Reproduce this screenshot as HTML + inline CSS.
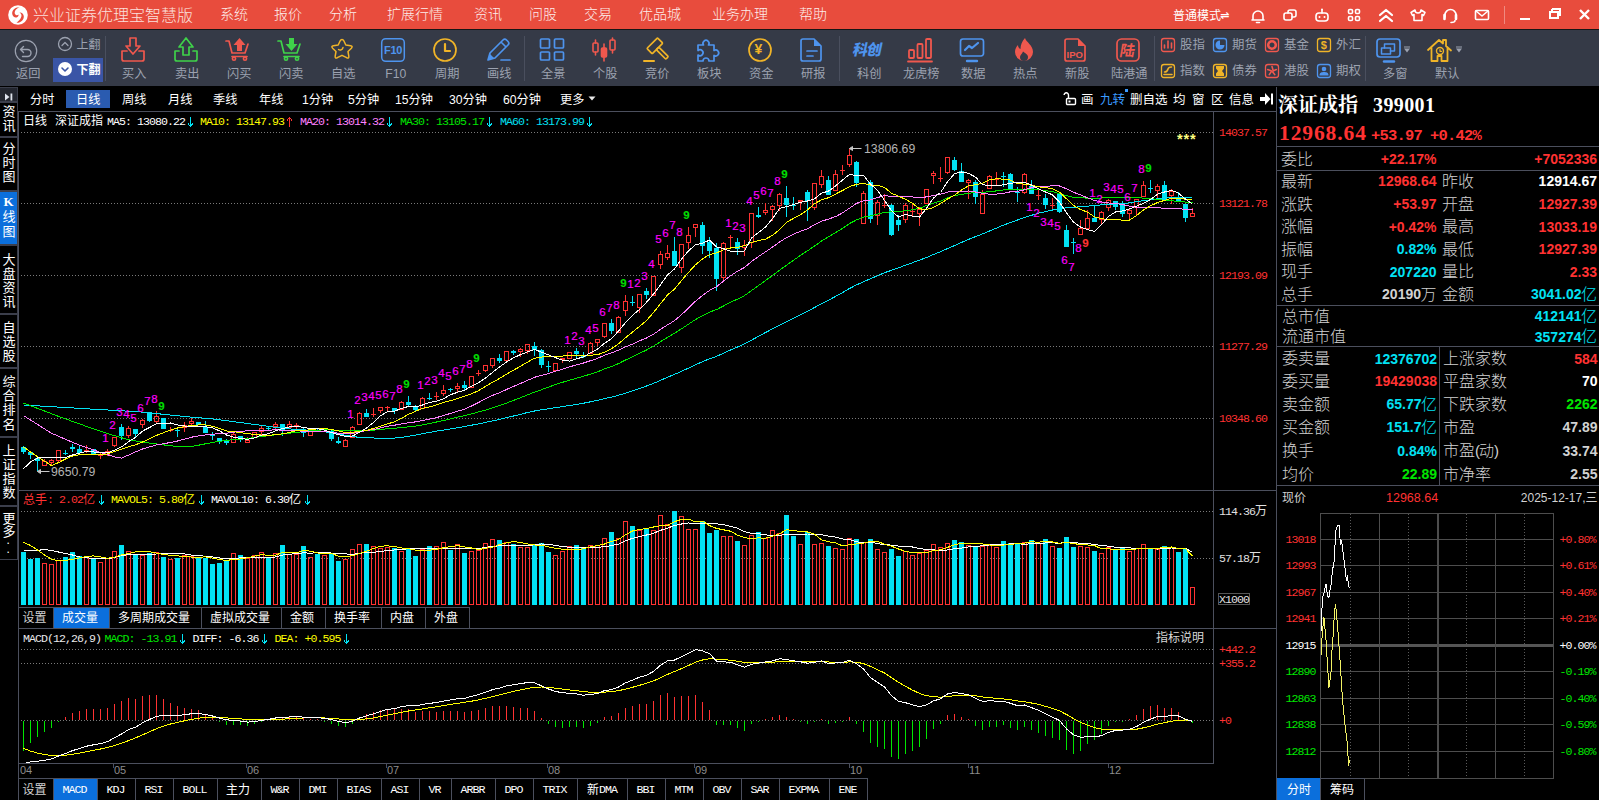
<!DOCTYPE html>
<html lang="zh-CN">
<head>
<meta charset="utf-8">
<title>兴业证券优理宝智慧版</title>
<style>
html,body{margin:0;padding:0;background:#000;}
body{width:1599px;height:800px;overflow:hidden;position:relative;font-family:"Liberation Sans","Noto Sans CJK SC",sans-serif;}
div,span,svg{position:absolute;}
span{white-space:nowrap;display:block;}
svg{overflow:visible;}
</style>
</head>
<body>
<div id="titlebar" style="left:0;top:0;width:1599px;height:29px;background:#e84c3d">
<svg style="position:absolute;left:6px;top:3px" width="24" height="24" viewBox="0 0 24 24"><circle cx="12" cy="12" r="9.800" fill="#fff"/><path d="M13.500 4.200c-4.500-.300-7.500 3-7.300 6.500.200 2.500 2.300 4 4.300 3.700 1.500-.300 2.300-1.500 2-2.800-1 1.200-3 .800-3.600-.800-.800-2.500 1.200-5.500 4.600-6.600z" fill="#e84c3d"/><path d="M10.500 19.800c4.500.300 7.500-3 7.300-6.500-.200-2.500-2.300-4-4.300-3.700 2 1 2.500 3 1.500 5-.800 2-2.500 3.800-4.500 5.200z" fill="#e84c3d"/></svg>
<span style="top:4.76px;font-size:16px;line-height:21px;color:#fbe0dc;left:33.00px;font-weight:300;">兴业证券优理宝智慧版</span>
<span style="top:4.95px;font-size:14px;line-height:18px;color:#fdeeec;left:220.00px;font-weight:300;">系统</span>
<span style="top:4.95px;font-size:14px;line-height:18px;color:#fdeeec;left:274.00px;font-weight:300;">报价</span>
<span style="top:4.95px;font-size:14px;line-height:18px;color:#fdeeec;left:329.00px;font-weight:300;">分析</span>
<span style="top:4.95px;font-size:14px;line-height:18px;color:#fdeeec;left:387.00px;font-weight:300;">扩展行情</span>
<span style="top:4.95px;font-size:14px;line-height:18px;color:#fdeeec;left:474.00px;font-weight:300;">资讯</span>
<span style="top:4.95px;font-size:14px;line-height:18px;color:#fdeeec;left:529.00px;font-weight:300;">问股</span>
<span style="top:4.95px;font-size:14px;line-height:18px;color:#fdeeec;left:584.00px;font-weight:300;">交易</span>
<span style="top:4.95px;font-size:14px;line-height:18px;color:#fdeeec;left:639.00px;font-weight:300;">优品城</span>
<span style="top:4.95px;font-size:14px;line-height:18px;color:#fdeeec;left:712.00px;font-weight:300;">业务办理</span>
<span style="top:4.95px;font-size:14px;line-height:18px;color:#fdeeec;left:799.00px;font-weight:300;">帮助</span>
<span style="top:7.64px;font-size:12px;line-height:16px;color:#fff;left:1173.00px;">普通模式</span>
<span style="top:8.69px;font-size:11px;line-height:14px;color:#fff;left:1220.00px;font-family:'DejaVu Sans',sans-serif;font-weight:bold;">⇌</span>
<svg style="position:absolute;left:1248px;top:4px" width="20" height="22" viewBox="-10 -11 20 22"><path d="M-6 5h12M-5 5v-4a5 5 0 0 1 10 0v4M-1.5 7.5h3" fill="none" stroke="#fff" stroke-width="1.6" stroke-linecap="round" stroke-linejoin="round"/></svg>
<svg style="position:absolute;left:1280px;top:4px" width="20" height="22" viewBox="-10 -11 20 22"><rect x="-6" y="-2" width="8" height="7" rx="2" fill="none" stroke="#fff" stroke-width="1.6" stroke-linecap="round" stroke-linejoin="round"/><path d="M-2-2v-1a2 2 0 0 1 2-2h4a2 2 0 0 1 2 2v3a2 2 0 0 1-2 2h-2" fill="none" stroke="#fff" stroke-width="1.6" stroke-linecap="round" stroke-linejoin="round"/></svg>
<svg style="position:absolute;left:1312px;top:4px" width="20" height="22" viewBox="-10 -11 20 22"><rect x="-6" y="-2" width="12" height="8" rx="3" fill="none" stroke="#fff" stroke-width="1.6" stroke-linecap="round" stroke-linejoin="round"/><path d="M0-2v-3" fill="none" stroke="#fff" stroke-width="1.6" stroke-linecap="round" stroke-linejoin="round"/><circle cx="0" cy="-5.5" r="1" fill="#fff"/><circle cx="-2.5" cy="2" r="1" fill="#fff"/><circle cx="2.5" cy="2" r="1" fill="#fff"/></svg>
<svg style="position:absolute;left:1344px;top:4px" width="20" height="22" viewBox="-10 -11 20 22"><rect x="-5.5" y="-5.5" width="4" height="4" rx="1.3" fill="none" stroke="#fff" stroke-width="1.6" stroke-linecap="round" stroke-linejoin="round"/><rect x="1.5" y="-5.5" width="4" height="4" rx="1.3" fill="none" stroke="#fff" stroke-width="1.6" stroke-linecap="round" stroke-linejoin="round"/><rect x="-5.5" y="1.5" width="4" height="4" rx="1.3" fill="none" stroke="#fff" stroke-width="1.6" stroke-linecap="round" stroke-linejoin="round"/><rect x="1.5" y="1.5" width="4" height="4" rx="1.3" fill="none" stroke="#fff" stroke-width="1.6" stroke-linecap="round" stroke-linejoin="round"/></svg>
<svg style="position:absolute;left:1376px;top:4px" width="20" height="22" viewBox="-10 -11 20 22"><path d="M-6 0l6-5 6 5M-6 6l6-5 6 5" fill="none" stroke="#fff" stroke-width="2.2" stroke-linecap="round" stroke-linejoin="round"/></svg>
<svg style="position:absolute;left:1408px;top:4px" width="20" height="22" viewBox="-10 -11 20 22"><path d="M-3-5l-4 2.5 1.5 3 1.5-1v6h8v-6l1.5 1 1.5-3-4-2.5a3 3 0 0 1-6 0z" fill="none" stroke="#fff" stroke-width="1.6" stroke-linecap="round" stroke-linejoin="round"/></svg>
<svg style="position:absolute;left:1440px;top:4px" width="20" height="22" viewBox="-10 -11 20 22"><path d="M-5 2v-2a5.5 5.5 0 0 1 11 0v2" fill="none" stroke="#fff" stroke-width="1.6" stroke-linecap="round" stroke-linejoin="round"/><path d="M-5.5 0v4M6 0v4" stroke="#fff" stroke-width="2.6" stroke-linecap="round"/><path d="M5 5.5c0 1.5-2 2-4 2" fill="none" stroke="#fff" stroke-width="1.6" stroke-linecap="round" stroke-linejoin="round"/></svg>
<svg style="position:absolute;left:1472px;top:4px" width="20" height="22" viewBox="-10 -11 20 22"><rect x="-6.5" y="-4.5" width="13" height="9" rx="1" fill="none" stroke="#fff" stroke-width="1.6" stroke-linecap="round" stroke-linejoin="round"/><path d="M-6-4l6 5 6-5" fill="none" stroke="#fff" stroke-width="1.6" stroke-linecap="round" stroke-linejoin="round"/></svg>
<div style="left:1504px;top:6px;width:1px;height:18px;background:#f08a80;"></div>
<div style="left:1520px;top:18px;width:10px;height:2px;background:#fff;"></div>
<svg style="position:absolute;left:1548px;top:7px" width="14" height="14" viewBox="0 0 14 14" shape-rendering="crispEdges"><path d="M4 2h8v6h-2M4 2v2" fill="none" stroke="#fff" stroke-width="2"/><rect x="2" y="5" width="8" height="6" fill="none" stroke="#fff" stroke-width="2"/></svg>
<svg style="position:absolute;left:1578px;top:8px" width="14" height="14" viewBox="0 0 14 14"><path d="M2 2l9 9M11 2l-9 9" fill="none" stroke="#fff" stroke-width="2.4"/></svg>
</div>
<div style="left:0px;top:29px;width:1599px;height:1px;background:#161616;"></div>
<div id="toolbar" style="left:0;top:30px;width:1599px;height:56px;background:#353a47">
<svg style="position:absolute;left:10.0px;top:5.199999999999999px" width="32" height="32" viewBox="-16.0 -16.0 32 32"><circle r="10.700" fill="none" stroke="#9ca2b0" stroke-width="1.2" stroke-linecap="round" stroke-linejoin="round"/><path d="M-5.5-1.5h7a3.5 3.5 0 0 1 0 7h-5M-5.5-1.5l3-3M-5.5-1.5l3 3" fill="none" stroke="#9ca2b0" stroke-width="1.4" stroke-linecap="round" stroke-linejoin="round"/></svg>
<span style="top:36.47px;font-size:12.2px;line-height:16px;color:#9ca2b0;left:16.00px;">返回</span>
<svg style="position:absolute;left:57.0px;top:6.0px" width="16" height="16" viewBox="-8.0 -8.0 16 16"><circle r="6.5" fill="none" stroke="#9ca2b0" stroke-width="1.3" stroke-linecap="round" stroke-linejoin="round"/><path d="M-3 1.5l3-3 3 3" fill="none" stroke="#9ca2b0" stroke-width="1.3" stroke-linecap="round" stroke-linejoin="round"/></svg>
<span style="top:7.34px;font-size:12px;line-height:16px;color:#9ca2b0;left:76.50px;">上翻</span>
<div style="left:53px;top:28px;width:50px;height:24px;background:#3a55a6;"></div>
<svg style="position:absolute;left:57.0px;top:31.0px" width="16" height="16" viewBox="-8.0 -8.0 16 16"><circle r="7" fill="#fff"/><path d="M-3-1l3 3 3-3" fill="none" stroke="#3a55a6" stroke-width="1.6" stroke-linecap="round" stroke-linejoin="round"/></svg>
<span style="top:31.84px;font-size:12px;line-height:16px;color:#fff;left:76.50px;font-weight:bold;">下翻</span>
<div style="left:105px;top:6px;width:1px;height:45px;background:#4a4f5e;"></div>
<svg style="position:absolute;left:117.0px;top:3.5px" width="32" height="32" viewBox="-16.0 -16.0 32 32"><path d="M-3-12h6v8h4l-7 8-7-8h4z" fill="none" stroke="#f0584e" stroke-width="1.7" stroke-linecap="round" stroke-linejoin="round"/><path d="M-11 1v8a2 2 0 0 0 2 2h18a2 2 0 0 0 2-2v-8h-5M-11 1h5" fill="none" stroke="#f0584e" stroke-width="1.7" stroke-linecap="round" stroke-linejoin="round"/></svg>
<span style="top:36.47px;font-size:12.2px;line-height:16px;color:#9ca2b0;left:122.00px;">买入</span>
<svg style="position:absolute;left:170.0px;top:3.5px" width="32" height="32" viewBox="-16.0 -16.0 32 32"><path d="M-3 5h6v-8h4l-7-9-7 9h4z" fill="none" stroke="#3fd24a" stroke-width="1.7" stroke-linecap="round" stroke-linejoin="round"/><path d="M-11 1v8a2 2 0 0 0 2 2h18a2 2 0 0 0 2-2v-8h-4M-11 1h4" fill="none" stroke="#3fd24a" stroke-width="1.7" stroke-linecap="round" stroke-linejoin="round"/></svg>
<span style="top:36.47px;font-size:12.2px;line-height:16px;color:#9ca2b0;left:175.00px;">卖出</span>
<svg style="position:absolute;left:222.0px;top:3.5px" width="32" height="32" viewBox="-16.0 -16.0 32 32"><path d="M-12-9h3l3 12h13l3-9 M-6 6.500h15" fill="none" stroke="#f0584e" stroke-width="1.7" stroke-linecap="round" stroke-linejoin="round"/><circle cx="-4" cy="8.700" r="1.600" fill="none" stroke="#f0584e" stroke-width="1.6" stroke-linecap="round" stroke-linejoin="round"/><circle cx="7" cy="8.700" r="1.600" fill="none" stroke="#f0584e" stroke-width="1.6" stroke-linecap="round" stroke-linejoin="round"/><path d="M-1 1v-6h-3.5l6-7 6 7h-3.5v6z" fill="#f0584e"/></svg>
<span style="top:36.47px;font-size:12.2px;line-height:16px;color:#9ca2b0;left:227.00px;">闪买</span>
<svg style="position:absolute;left:274.0px;top:3.5px" width="32" height="32" viewBox="-16.0 -16.0 32 32"><path d="M-12-9h3l3 12h13l3-9 M-6 6.500h15" fill="none" stroke="#3fd24a" stroke-width="1.7" stroke-linecap="round" stroke-linejoin="round"/><circle cx="-4" cy="8.700" r="1.600" fill="none" stroke="#3fd24a" stroke-width="1.6" stroke-linecap="round" stroke-linejoin="round"/><circle cx="7" cy="8.700" r="1.600" fill="none" stroke="#3fd24a" stroke-width="1.6" stroke-linecap="round" stroke-linejoin="round"/><path d="M-1-12v6h-3.5l6 7 6-7h-3.5v-6z" fill="#3fd24a"/></svg>
<span style="top:36.47px;font-size:12.2px;line-height:16px;color:#9ca2b0;left:279.00px;">闪卖</span>
<svg style="position:absolute;left:325.5px;top:3.5px" width="32" height="32" viewBox="-16.0 -16.0 32 32"><path d="M0-10.500q1.200 0 1.800 1.300l2 4.200 4.800.700q2.600.500.800 2.500l-3.400 3.300.800 4.700q.400 2.700-2.100 1.500l-4.700-2.400-4.700 2.400q-2.500 1.200-2.100-1.500l.800-4.700-3.400-3.300q-1.800-2 .800-2.500l4.800-.700 2-4.200q.600-1.300 1.800-1.300z" fill="none" stroke="#f0b428" stroke-width="1.5" stroke-linecap="round" stroke-linejoin="round"/><path d="M-3.500-.500c1.500 1 4 .500 4.500-2" fill="none" stroke="#f0b428" stroke-width="1.4" stroke-linecap="round" stroke-linejoin="round"/></svg>
<span style="top:36.47px;font-size:12.2px;line-height:16px;color:#9ca2b0;left:331.00px;">自选</span>
<svg style="position:absolute;left:377.0px;top:3.5px" width="32" height="32" viewBox="-16.0 -16.0 32 32"><rect x="-11.300" y="-11.300" width="22.600" height="22.600" rx="4" fill="none" stroke="#4e94ee" stroke-width="1.5" stroke-linecap="round" stroke-linejoin="round"/></svg>
<span style="top:13.19px;font-size:11px;line-height:14px;color:#4e94ee;left:384.00px;font-weight:bold;letter-spacing:-0.3px;">F10</span>
<span style="top:36.47px;font-size:12.2px;line-height:16px;color:#9ca2b0;left:385.20px;">F10</span>
<svg style="position:absolute;left:429.0px;top:3.5px" width="32" height="32" viewBox="-16.0 -16.0 32 32"><circle r="11" fill="none" stroke="#f0b428" stroke-width="1.7" stroke-linecap="round" stroke-linejoin="round"/><path d="M0-6v7h5" fill="none" stroke="#f0b428" stroke-width="2.2" stroke-linecap="round" stroke-linejoin="round"/></svg>
<span style="top:36.47px;font-size:12.2px;line-height:16px;color:#9ca2b0;left:435.00px;">周期</span>
<svg style="position:absolute;left:482.0px;top:3.5px" width="32" height="32" viewBox="-16.0 -16.0 32 32"><path d="M-10 10l2-7 13-13a2.5 2.5 0 0 1 3.5 0l1.5 1.5a2.5 2.5 0 0 1 0 3.5l-13 13z M3-8l5 5" fill="none" stroke="#4e94ee" stroke-width="1.7" stroke-linecap="round" stroke-linejoin="round"/><path d="M-10 10l2-6 4 4z" fill="#4e94ee"/><path d="M3 10h9" fill="none" stroke="#4e94ee" stroke-width="1.7" stroke-linecap="round" stroke-linejoin="round"/></svg>
<span style="top:36.47px;font-size:12.2px;line-height:16px;color:#9ca2b0;left:487.00px;">画线</span>
<div style="left:524px;top:6px;width:1px;height:45px;background:#4a4f5e;"></div>
<svg style="position:absolute;left:536.0px;top:3.5px" width="32" height="32" viewBox="-16.0 -16.0 32 32"><rect x="-11.5" y="-11" width="9" height="9" rx="1" fill="none" stroke="#4e94ee" stroke-width="1.7" stroke-linecap="round" stroke-linejoin="round"/><rect x="2.5" y="-11" width="9" height="9" rx="1" fill="none" stroke="#4e94ee" stroke-width="1.7" stroke-linecap="round" stroke-linejoin="round"/><rect x="-11.5" y="2" width="9" height="8" rx="1" fill="none" stroke="#4e94ee" stroke-width="1.7" stroke-linecap="round" stroke-linejoin="round"/><rect x="2.5" y="2" width="9" height="8" rx="1" fill="none" stroke="#4e94ee" stroke-width="1.7" stroke-linecap="round" stroke-linejoin="round"/></svg>
<span style="top:36.47px;font-size:12.2px;line-height:16px;color:#9ca2b0;left:541.00px;">全景</span>
<svg style="position:absolute;left:588.0px;top:3.5px" width="32" height="32" viewBox="-16.0 -16.0 32 32"><rect x="-11" y="-7" width="5" height="9" rx="1" fill="none" stroke="#f0584e" stroke-width="1.6" stroke-linecap="round" stroke-linejoin="round"/><path d="M-8.5-10v3M-8.5 2v3" fill="none" stroke="#f0584e" stroke-width="1.6" stroke-linecap="round" stroke-linejoin="round"/><rect x="-2.5" y="-2" width="5" height="9" rx="1" fill="#f0584e" stroke="#f0584e" stroke-width="1.6"/><path d="M0-6v4M0 7v4" fill="none" stroke="#f0584e" stroke-width="1.6" stroke-linecap="round" stroke-linejoin="round"/><rect x="6" y="-10" width="5" height="10" rx="1" fill="none" stroke="#f0584e" stroke-width="1.6" stroke-linecap="round" stroke-linejoin="round"/><path d="M8.5-12v2M8.5 0v3" fill="none" stroke="#f0584e" stroke-width="1.6" stroke-linecap="round" stroke-linejoin="round"/></svg>
<span style="top:36.47px;font-size:12.2px;line-height:16px;color:#9ca2b0;left:593.00px;">个股</span>
<svg style="position:absolute;left:640.0px;top:3.5px" width="32" height="32" viewBox="-16.0 -16.0 32 32"><g transform="rotate(-45 -1 -4)"><rect x="-8.500" y="-8" width="15" height="7.500" rx="1" fill="none" stroke="#f0b428" stroke-width="1.7" stroke-linecap="round" stroke-linejoin="round"/><rect x="-2.700" y="-.500" width="3.600" height="13.500" rx="1" fill="none" stroke="#f0b428" stroke-width="1.7" stroke-linecap="round" stroke-linejoin="round"/></g><path d="M-12 11h10" fill="none" stroke="#f0b428" stroke-width="2" stroke-linecap="round" stroke-linejoin="round"/></svg>
<span style="top:36.47px;font-size:12.2px;line-height:16px;color:#9ca2b0;left:645.00px;">竞价</span>
<svg style="position:absolute;left:692.0px;top:3.5px" width="32" height="32" viewBox="-16.0 -16.0 32 32"><path d="M-10-5h5.5a3 3 0 1 1 5 0h5.5v5.5a3 3 0 1 1 0 5v5.500h-5a3 3 0 1 0-6 0h-5v-6a3 3 0 1 0 0-4.500z" fill="none" stroke="#4e94ee" stroke-width="1.7" stroke-linecap="round" stroke-linejoin="round"/></svg>
<span style="top:36.47px;font-size:12.2px;line-height:16px;color:#9ca2b0;left:697.00px;">板块</span>
<svg style="position:absolute;left:744.0px;top:3.5px" width="32" height="32" viewBox="-16.0 -16.0 32 32"><circle r="11" fill="none" stroke="#f0b428" stroke-width="1.7" stroke-linecap="round" stroke-linejoin="round"/></svg>
<span style="top:10.15px;font-size:14px;line-height:18px;color:#f0b428;left:754.50px;font-weight:bold;">¥</span>
<span style="top:36.47px;font-size:12.2px;line-height:16px;color:#9ca2b0;left:749.00px;">资金</span>
<svg style="position:absolute;left:796.0px;top:3.5px" width="32" height="32" viewBox="-16.0 -16.0 32 32"><path d="M-9-11h11l7 7v13a2 2 0 0 1-2 2h-16a2 2 0 0 1-2-2v-18a2 2 0 0 1 2-2z" fill="none" stroke="#4e94ee" stroke-width="1.7" stroke-linecap="round" stroke-linejoin="round"/><path d="M2-11v7h7z" fill="#4e94ee"/><path d="M-5 1h10M-5 6h6" fill="none" stroke="#4e94ee" stroke-width="1.7" stroke-linecap="round" stroke-linejoin="round"/></svg>
<span style="top:36.47px;font-size:12.2px;line-height:16px;color:#9ca2b0;left:801.00px;">研报</span>
<div style="left:839px;top:6px;width:1px;height:45px;background:#4a4f5e;"></div>
<span style="top:10.30px;font-size:15px;line-height:20px;color:#4e94ee;left:853.00px;font-weight:900;transform:skewX(-12deg);letter-spacing:-1px;">科创</span>
<span style="top:36.47px;font-size:12.2px;line-height:16px;color:#9ca2b0;left:857.00px;">科创</span>
<svg style="position:absolute;left:904.0px;top:3.5px" width="32" height="32" viewBox="-16.0 -16.0 32 32"><rect x="-11" y="0" width="5" height="8" rx="1" fill="none" stroke="#f0584e" stroke-width="1.8" stroke-linecap="round" stroke-linejoin="round"/><rect x="-2.5" y="-6" width="5" height="14" rx="1" fill="none" stroke="#f0584e" stroke-width="1.8" stroke-linecap="round" stroke-linejoin="round"/><rect x="6" y="-11" width="5" height="19" rx="1" fill="none" stroke="#f0584e" stroke-width="1.8" stroke-linecap="round" stroke-linejoin="round"/><path d="M-12 11.500h24" fill="none" stroke="#f0584e" stroke-width="1.8" stroke-linecap="round" stroke-linejoin="round"/></svg>
<span style="top:36.47px;font-size:12.2px;line-height:16px;color:#9ca2b0;left:902.90px;">龙虎榜</span>
<svg style="position:absolute;left:956.0px;top:3.5px" width="32" height="32" viewBox="-16.0 -16.0 32 32"><rect x="-11.5" y="-11" width="23" height="17" rx="2.500" fill="none" stroke="#4e94ee" stroke-width="1.7" stroke-linecap="round" stroke-linejoin="round"/><path d="M-5 11h10" fill="none" stroke="#4e94ee" stroke-width="2.4" stroke-linecap="round" stroke-linejoin="round"/><path d="M-7 0l4-4 3 2 6-5" fill="none" stroke="#4e94ee" stroke-width="2.2" stroke-linecap="round" stroke-linejoin="round"/></svg>
<span style="top:36.47px;font-size:12.2px;line-height:16px;color:#9ca2b0;left:961.00px;">数据</span>
<svg style="position:absolute;left:1008.0px;top:3.5px" width="32" height="32" viewBox="-16.0 -16.0 32 32"><path d="M1-12c1 4 8 7 8 14a9 9 0 0 1-18 0c0-3 1.5-5.500 3-7 0 2 1 3.500 2.500 4 0-4 1.500-8 4.500-11z" fill="#f0584e"/><path d="M0 11a4 4 0 0 1-4-4c0-2 2-3 3-5.500 2 1.500 5 3 5 5.500a4 4 0 0 1-4 4z" fill="#353a47"/></svg>
<span style="top:36.47px;font-size:12.2px;line-height:16px;color:#9ca2b0;left:1013.00px;">热点</span>
<svg style="position:absolute;left:1060.0px;top:3.5px" width="32" height="32" viewBox="-16.0 -16.0 32 32"><path d="M-9-11h11l7 7v13a2 2 0 0 1-2 2h-16a2 2 0 0 1-2-2v-18a2 2 0 0 1 2-2z" fill="none" stroke="#f0584e" stroke-width="1.7" stroke-linecap="round" stroke-linejoin="round"/><path d="M2-11v7h7z" fill="#f0584e"/></svg>
<span style="top:19.21px;font-size:9.5px;line-height:12px;color:#f0584e;left:1066.50px;font-weight:bold;">IPO</span>
<span style="top:36.47px;font-size:12.2px;line-height:16px;color:#9ca2b0;left:1065.00px;">新股</span>
<svg style="position:absolute;left:1112.0px;top:3.5px" width="32" height="32" viewBox="-16.0 -16.0 32 32"><rect x="-11" y="-11" width="22" height="22" rx="4.500" fill="none" stroke="#f0584e" stroke-width="1.7" stroke-linecap="round" stroke-linejoin="round"/></svg>
<span style="top:10.80px;font-size:15px;line-height:20px;color:#f0584e;left:1120.00px;font-weight:bold;transform:skewX(-10deg);">陆</span>
<span style="top:36.47px;font-size:12.2px;line-height:16px;color:#9ca2b0;left:1110.90px;">陆港通</span>
<div style="left:1154px;top:6px;width:1px;height:45px;background:#4a4f5e;"></div>
<svg style="position:absolute;left:1159.0px;top:6.0px" width="18" height="18" viewBox="-9.0 -9.0 18 18"><rect x="-6.500" y="-6.500" width="13" height="13" rx="2.500" fill="none" stroke="#f0584e" stroke-width="1.3" stroke-linecap="round" stroke-linejoin="round"/><path d="M-3.500 3v-3M0 3v-7M3.500 3v-5" fill="none" stroke="#f0584e" stroke-width="1.6" stroke-linecap="round" stroke-linejoin="round"/></svg>
<span style="top:7.30px;font-size:12.4px;line-height:16px;color:#9ca2b0;left:1180.00px;">股指</span>
<svg style="position:absolute;left:1211.0px;top:6.0px" width="18" height="18" viewBox="-9.0 -9.0 18 18"><rect x="-6.500" y="-6.500" width="13" height="13" rx="2.500" fill="none" stroke="#4e94ee" stroke-width="1.3" stroke-linecap="round" stroke-linejoin="round"/><path d="M0 0v-4.500a4.500 4.500 0 1 0 4.500 4.500z" fill="#4e94ee"/></svg>
<span style="top:7.30px;font-size:12.4px;line-height:16px;color:#9ca2b0;left:1232.00px;">期货</span>
<svg style="position:absolute;left:1263.0px;top:6.0px" width="18" height="18" viewBox="-9.0 -9.0 18 18"><rect x="-6.500" y="-6.500" width="13" height="13" rx="2.500" fill="none" stroke="#f0584e" stroke-width="1.3" stroke-linecap="round" stroke-linejoin="round"/><circle r="3.800" fill="none" stroke="#f0584e" stroke-width="2.600"/></svg>
<span style="top:7.30px;font-size:12.4px;line-height:16px;color:#9ca2b0;left:1284.00px;">基金</span>
<svg style="position:absolute;left:1315.0px;top:6.0px" width="18" height="18" viewBox="-9.0 -9.0 18 18"><rect x="-6.500" y="-6.500" width="13" height="13" rx="2.500" fill="none" stroke="#f0b428" stroke-width="1.3" stroke-linecap="round" stroke-linejoin="round"/></svg>
<span style="top:8.39px;font-size:11px;line-height:14px;color:#f0b428;left:1320.80px;font-weight:bold;">$</span>
<span style="top:7.30px;font-size:12.4px;line-height:16px;color:#9ca2b0;left:1336.00px;">外汇</span>
<svg style="position:absolute;left:1159.0px;top:32.0px" width="18" height="18" viewBox="-9.0 -9.0 18 18"><rect x="-6.500" y="-6.500" width="13" height="13" rx="2.500" fill="none" stroke="#f0b428" stroke-width="1.3" stroke-linecap="round" stroke-linejoin="round"/><path d="M-4 3.500h8M-3.500 1c2.500 0 3-1 3.500-3s2-2 3.500-2" fill="none" stroke="#f0b428" stroke-width="1.6" stroke-linecap="round" stroke-linejoin="round"/></svg>
<span style="top:33.30px;font-size:12.4px;line-height:16px;color:#9ca2b0;left:1180.00px;">指数</span>
<svg style="position:absolute;left:1211.0px;top:32.0px" width="18" height="18" viewBox="-9.0 -9.0 18 18"><rect x="-6.500" y="-6.500" width="13" height="13" rx="2.500" fill="none" stroke="#f0b428" stroke-width="1.3" stroke-linecap="round" stroke-linejoin="round"/><path d="M-4-5h8v2.500l-2 2.500 2 2.500v2.500h-8v-2.500l2-2.500-2-2.500z" fill="#f0b428"/></svg>
<span style="top:33.30px;font-size:12.4px;line-height:16px;color:#9ca2b0;left:1232.00px;">债券</span>
<svg style="position:absolute;left:1263.0px;top:32.0px" width="18" height="18" viewBox="-9.0 -9.0 18 18"><rect x="-6.500" y="-6.500" width="13" height="13" rx="2.500" fill="none" stroke="#f0584e" stroke-width="1.3" stroke-linecap="round" stroke-linejoin="round"/><path d="M0-4.500l1 3.500M4.300-1.400l-3.300 1.500M2.700 3.600l-2.200-2.800M-2.700 3.600l2-3M-4.300-1.400l3.500 1.200" fill="none" stroke="#f0584e" stroke-width="1.6" stroke-linecap="round" stroke-linejoin="round"/></svg>
<span style="top:33.30px;font-size:12.4px;line-height:16px;color:#9ca2b0;left:1284.00px;">港股</span>
<svg style="position:absolute;left:1315.0px;top:32.0px" width="18" height="18" viewBox="-9.0 -9.0 18 18"><rect x="-6.500" y="-6.500" width="13" height="13" rx="2.500" fill="none" stroke="#4e94ee" stroke-width="1.3" stroke-linecap="round" stroke-linejoin="round"/><circle cy="-2" r="2.300" fill="#4e94ee"/><path d="M-4.500 4.500c0-3 2-3.500 4.500-3.500s4.500.500 4.500 3.500z" fill="#4e94ee"/></svg>
<span style="top:33.30px;font-size:12.4px;line-height:16px;color:#9ca2b0;left:1336.00px;">期权</span>
<div style="left:1365px;top:6px;width:1px;height:45px;background:#4a4f5e;"></div>
<svg style="position:absolute;left:1373.0px;top:3.5px" width="32" height="32" viewBox="-16.0 -16.0 32 32"><rect x="-12" y="-11" width="23" height="18" rx="3" fill="none" stroke="#4e94ee" stroke-width="1.7" stroke-linecap="round" stroke-linejoin="round"/><path d="M-5 11.500h10" fill="none" stroke="#4e94ee" stroke-width="2.4" stroke-linecap="round" stroke-linejoin="round"/><rect x="-7.500" y="-2" width="9" height="6" fill="none" stroke="#4e94ee" stroke-width="1.5" stroke-linecap="round" stroke-linejoin="round"/><path d="M-4.500-2v-4h10v7h-4" fill="none" stroke="#4e94ee" stroke-width="1.5" stroke-linecap="round" stroke-linejoin="round"/></svg>
<svg style="position:absolute;left:1402.0px;top:15.0px" width="10" height="10" viewBox="-5.0 -5.0 10 10"><path d="M-3-1.500h6l-3 4z" fill="#9ca2b0"/><path d="M-3-3h6" stroke="#9ca2b0" stroke-width="1"/></svg>
<span style="top:36.47px;font-size:12.2px;line-height:16px;color:#9ca2b0;left:1383.00px;">多窗</span>
<svg style="position:absolute;left:1424.0px;top:3.5px" width="32" height="32" viewBox="-16.0 -16.0 32 32"><path d="M-12 0l11-10 4 3.500v-3.500h3v6l5 4.500M-8.500-2v13h6v-5h4v5h6v-13" fill="none" stroke="#f0b428" stroke-width="1.8" stroke-linecap="round" stroke-linejoin="round"/><circle cx="0" cy="1" r="3.500" fill="none" stroke="#f0b428" stroke-width="1.4" stroke-linecap="round" stroke-linejoin="round"/><path d="M0-.500v1.800h1.500" fill="none" stroke="#f0b428" stroke-width="1.2" stroke-linecap="round" stroke-linejoin="round"/></svg>
<svg style="position:absolute;left:1454.0px;top:15.0px" width="10" height="10" viewBox="-5.0 -5.0 10 10"><path d="M-3-1.500h6l-3 4z" fill="#9ca2b0"/><path d="M-3-3h6" stroke="#9ca2b0" stroke-width="1"/></svg>
<span style="top:36.47px;font-size:12.2px;line-height:16px;color:#9ca2b0;left:1435.00px;">默认</span>
</div>
<div id="sidebar" style="left:0;top:87px;width:18px;height:713px;background:#000">
<div style="left:0;top:0px;width:18px;height:15px;background:#23262f;border:1px solid #3b3e4b;border-left:0;box-sizing:border-box"></div>
<svg style="position:absolute;left:4px;top:4.500px" width="10" height="10" viewBox="0 0 10 10"><path d="M1 1.500l4.500 3.500-4.500 3.500z" fill="#dfe3ec"/><rect x="6.500" y="1.500" width="1.800" height="7" fill="#dfe3ec"/></svg>
<div style="left:0;top:15px;width:18px;height:35px;background:#000;border:1px solid #3b3e4b;border-left:0;box-sizing:border-box"></div>
<span style="top:15.70px;font-size:13px;line-height:17px;color:#fff;left:2.50px;">资</span>
<span style="top:30.20px;font-size:13px;line-height:17px;color:#fff;left:2.50px;">讯</span>
<div style="left:0;top:50px;width:18px;height:54px;background:#000;border:1px solid #3b3e4b;border-left:0;box-sizing:border-box"></div>
<span style="top:53.20px;font-size:13px;line-height:17px;color:#fff;left:2.50px;">分</span>
<span style="top:67.20px;font-size:13px;line-height:17px;color:#fff;left:2.50px;">时</span>
<span style="top:81.20px;font-size:13px;line-height:17px;color:#fff;left:2.50px;">图</span>
<div style="left:0;top:104px;width:18px;height:54px;background:#0b6fdc;border:1px solid #3b3e4b;border-left:0;box-sizing:border-box"></div>
<span style="top:106.11px;font-size:13px;line-height:17px;color:#fff;left:3.50px;font-family:'Liberation Serif','Noto Serif CJK SC',serif;font-weight:bold;">K</span>
<span style="top:121.20px;font-size:13px;line-height:17px;color:#fff;left:2.50px;">线</span>
<span style="top:135.70px;font-size:13px;line-height:17px;color:#fff;left:2.50px;">图</span>
<div style="left:0;top:158px;width:18px;height:69px;background:#000;border:1px solid #3b3e4b;border-left:0;box-sizing:border-box"></div>
<span style="top:163.70px;font-size:13px;line-height:17px;color:#fff;left:2.50px;">大</span>
<span style="top:177.70px;font-size:13px;line-height:17px;color:#fff;left:2.50px;">盘</span>
<span style="top:192.20px;font-size:13px;line-height:17px;color:#fff;left:2.50px;">资</span>
<span style="top:206.20px;font-size:13px;line-height:17px;color:#fff;left:2.50px;">讯</span>
<div style="left:0;top:227px;width:18px;height:54px;background:#000;border:1px solid #3b3e4b;border-left:0;box-sizing:border-box"></div>
<span style="top:231.70px;font-size:13px;line-height:17px;color:#fff;left:2.50px;">自</span>
<span style="top:245.70px;font-size:13px;line-height:17px;color:#fff;left:2.50px;">选</span>
<span style="top:259.70px;font-size:13px;line-height:17px;color:#fff;left:2.50px;">股</span>
<div style="left:0;top:281px;width:18px;height:69px;background:#000;border:1px solid #3b3e4b;border-left:0;box-sizing:border-box"></div>
<span style="top:285.70px;font-size:13px;line-height:17px;color:#fff;left:2.50px;">综</span>
<span style="top:300.20px;font-size:13px;line-height:17px;color:#fff;left:2.50px;">合</span>
<span style="top:314.40px;font-size:13px;line-height:17px;color:#fff;left:2.50px;">排</span>
<span style="top:328.70px;font-size:13px;line-height:17px;color:#fff;left:2.50px;">名</span>
<div style="left:0;top:350px;width:18px;height:69px;background:#000;border:1px solid #3b3e4b;border-left:0;box-sizing:border-box"></div>
<span style="top:354.70px;font-size:13px;line-height:17px;color:#fff;left:2.50px;">上</span>
<span style="top:368.70px;font-size:13px;line-height:17px;color:#fff;left:2.50px;">证</span>
<span style="top:382.70px;font-size:13px;line-height:17px;color:#fff;left:2.50px;">指</span>
<span style="top:396.70px;font-size:13px;line-height:17px;color:#fff;left:2.50px;">数</span>
<div style="left:0;top:419px;width:18px;height:54px;background:#000;border:1px solid #3b3e4b;border-left:0;box-sizing:border-box"></div>
<span style="top:422.70px;font-size:13px;line-height:17px;color:#fff;left:2.50px;">更</span>
<span style="top:436.20px;font-size:13px;line-height:17px;color:#fff;left:2.50px;">多</span>
<span style="top:444.84px;font-size:12px;line-height:16px;color:#fff;left:6.50px;">.</span>
<span style="top:453.84px;font-size:12px;line-height:16px;color:#fff;left:6.50px;">.</span>
</div>
<div id="periodbar" style="left:18px;top:87px;width:1258px;height:25px;background:#000">
<div style="left:48px;top:3px;width:44px;height:18px;background:#2a5bb0;"></div>
<span style="top:5.37px;font-size:12.2px;line-height:16px;color:#fff;left:12.00px;">分时</span>
<span style="top:5.37px;font-size:12.2px;line-height:16px;color:#fff;left:58.00px;">日线</span>
<span style="top:5.37px;font-size:12.2px;line-height:16px;color:#fff;left:104.00px;">周线</span>
<span style="top:5.37px;font-size:12.2px;line-height:16px;color:#fff;left:150.00px;">月线</span>
<span style="top:5.37px;font-size:12.2px;line-height:16px;color:#fff;left:195.00px;">季线</span>
<span style="top:5.37px;font-size:12.2px;line-height:16px;color:#fff;left:241.00px;">年线</span>
<span style="top:5.37px;font-size:12.2px;line-height:16px;color:#fff;left:284.00px;">1分钟</span>
<span style="top:5.37px;font-size:12.2px;line-height:16px;color:#fff;left:330.00px;">5分钟</span>
<span style="top:5.37px;font-size:12.2px;line-height:16px;color:#fff;left:377.00px;">15分钟</span>
<span style="top:5.37px;font-size:12.2px;line-height:16px;color:#fff;left:431.00px;">30分钟</span>
<span style="top:5.37px;font-size:12.2px;line-height:16px;color:#fff;left:485.00px;">60分钟</span>
<span style="top:5.37px;font-size:12.2px;line-height:16px;color:#fff;left:542.00px;">更多</span>
<svg style="position:absolute;left:570px;top:9px" width="9" height="6" viewBox="0 0 9 6"><path d="M0.500 0.500h7l-3.500 4z" fill="#e8e8e8"/></svg>
<svg style="position:absolute;left:1045px;top:5px" width="14" height="14" viewBox="0 0 14 14"><rect x="3.500" y="6.500" width="9" height="6" rx="1" fill="none" stroke="#fff" stroke-width="1.400"/><path d="M5.500 6v-3a2.200 2.200 0 0 0-4.400 0" fill="none" stroke="#fff" stroke-width="1.400"/><rect x="5.500" y="8.500" width="2" height="2" fill="#fff"/></svg>
<span style="top:4.67px;font-size:12.5px;line-height:16px;color:#fff;left:1063.00px;">画</span>
<span style="top:4.67px;font-size:12.5px;line-height:16px;color:#3b9bff;left:1082.00px;">九转</span>
<div style="left:1107px;top:2px;width:3px;height:3px;background:#3b9bff;"></div>
<span style="top:4.67px;font-size:12.5px;line-height:16px;color:#fff;left:1112.00px;">删自选</span>
<span style="top:4.67px;font-size:12.5px;line-height:16px;color:#fff;left:1155.00px;">均</span>
<span style="top:4.67px;font-size:12.5px;line-height:16px;color:#fff;left:1174.00px;">窗</span>
<span style="top:4.67px;font-size:12.5px;line-height:16px;color:#fff;left:1193.00px;">区</span>
<span style="top:4.67px;font-size:12.5px;line-height:16px;color:#fff;left:1211.00px;">信息</span>
<svg style="position:absolute;left:1242px;top:6px" width="14" height="12" viewBox="0 0 14 12"><path d="M0 4h5v-4l5.500 6-5.500 6v-4h-5z" fill="#fff"/><rect x="11" y="0.500" width="2" height="11" fill="#fff"/></svg>
</div>
<svg width="1599" height="800" viewBox="0 0 1599 800" style="position:absolute;left:0;top:0" shape-rendering="crispEdges">
<line x1="21" y1="132.5" x2="1213" y2="132.5" stroke="#7a7a7a" stroke-width="1" stroke-dasharray="1 2"/>
<line x1="21" y1="203.5" x2="1213" y2="203.5" stroke="#7a7a7a" stroke-width="1" stroke-dasharray="1 2"/>
<line x1="21" y1="275.5" x2="1213" y2="275.5" stroke="#7a7a7a" stroke-width="1" stroke-dasharray="1 2"/>
<line x1="21" y1="346.5" x2="1213" y2="346.5" stroke="#7a7a7a" stroke-width="1" stroke-dasharray="1 2"/>
<line x1="21" y1="418.5" x2="1213" y2="418.5" stroke="#7a7a7a" stroke-width="1" stroke-dasharray="1 2"/>
<line x1="21" y1="511.5" x2="1213" y2="511.5" stroke="#7a7a7a" stroke-width="1" stroke-dasharray="1 2"/>
<line x1="21" y1="558.5" x2="1213" y2="558.5" stroke="#7a7a7a" stroke-width="1" stroke-dasharray="1 2"/>
<line x1="21" y1="649.5" x2="1213" y2="649.5" stroke="#7a7a7a" stroke-width="1" stroke-dasharray="1 2"/>
<line x1="21" y1="663.5" x2="1213" y2="663.5" stroke="#7a7a7a" stroke-width="1" stroke-dasharray="1 2"/>
<line x1="21" y1="720.5" x2="1213" y2="720.5" stroke="#7a7a7a" stroke-width="1" stroke-dasharray="1 2"/>
<path d="M23 446h1v8h-1zM21 447h5v5h-5zM30 451h1v8h-1zM28 452h5v3h-5zM37 457h1v14h-1zM35 458h5v3h-5zM65 450h1v5h-1zM63 453h5v1h-5zM72 444h1v8h-1zM70 447h5v2h-5zM79 446h1v9h-1zM77 449h5v4h-5zM93 449h1v6h-1zM91 449h5v6h-5zM121 424h1v16h-1zM119 427h5v9h-5zM135 429h1v9h-1zM133 429h5v5h-5zM149 412h1v10h-1zM147 412h5v9h-5zM163 418h1v11h-1zM161 418h5v11h-5zM177 428h1v9h-1zM175 430h5v1h-5zM198 422h1v3h-1zM196 422h5v3h-5zM205 421h1v12h-1zM203 427h5v6h-5zM212 432h1v8h-1zM210 435h5v1h-5zM219 438h1v6h-1zM217 438h5v3h-5zM226 439h1v6h-1zM224 440h5v3h-5zM240 436h1v6h-1zM238 436h5v4h-5zM268 426h1v4h-1zM266 428h5v1h-5zM282 424h1v12h-1zM280 424h5v6h-5zM303 427h1v10h-1zM301 429h5v4h-5zM317 428h1v3h-1zM315 430h5v1h-5zM331 429h1v12h-1zM329 431h5v8h-5zM338 437h1v7h-1zM336 441h5v2h-5zM366 409h1v8h-1zM364 413h5v4h-5zM394 408h1v6h-1zM392 408h5v3h-5zM408 396h1v10h-1zM406 402h5v3h-5zM415 405h1v6h-1zM413 406h5v4h-5zM429 393h1v7h-1zM427 398h5v1h-5zM450 388h1v4h-1zM448 389h5v1h-5zM464 381h1v9h-1zM462 385h5v3h-5zM499 354h1v9h-1zM497 358h5v3h-5zM513 350h1v5h-1zM511 351h5v2h-5zM534 342h1v14h-1zM532 346h5v4h-5zM541 349h1v19h-1zM539 350h5v15h-5zM548 361h1v11h-1zM546 366h5v1h-5zM576 348h1v11h-1zM574 351h5v3h-5zM583 352h1v6h-1zM581 356h5v1h-5zM611 319h1v15h-1zM609 323h5v8h-5zM632 296h1v10h-1zM630 302h5v1h-5zM646 288h1v11h-1zM644 291h5v4h-5zM674 237h1v29h-1zM672 251h5v15h-5zM702 222h1v32h-1zM700 225h5v21h-5zM709 237h1v21h-1zM707 242h5v9h-5zM716 243h1v48h-1zM714 248h5v31h-5zM737 238h1v17h-1zM735 242h5v7h-5zM758 207h1v11h-1zM756 215h5v2h-5zM786 186h1v31h-1zM784 198h5v7h-5zM793 197h1v13h-1zM791 205h5v1h-5zM807 190h1v31h-1zM805 192h5v9h-5zM828 176h1v19h-1zM826 180h5v15h-5zM856 161h1v26h-1zM854 162h5v21h-5zM870 180h1v43h-1zM868 182h5v37h-5zM891 204h1v32h-1zM889 205h5v30h-5zM898 215h1v16h-1zM896 220h5v5h-5zM954 157h1v14h-1zM952 160h5v10h-5zM961 163h1v19h-1zM959 171h5v11h-5zM975 180h1v24h-1zM973 182h5v15h-5zM1003 172h1v15h-1zM1001 176h5v1h-5zM1010 173h1v16h-1zM1008 174h5v15h-5zM1017 187h1v15h-1zM1015 192h5v1h-5zM1031 180h1v14h-1zM1029 186h5v8h-5zM1045 194h1v15h-1zM1043 198h5v7h-5zM1059 193h1v20h-1zM1057 193h5v19h-5zM1066 225h1v22h-1zM1064 230h5v17h-5zM1073 238h1v16h-1zM1071 242h5v1h-5zM1094 205h1v17h-1zM1092 218h5v4h-5zM1115 201h1v9h-1zM1113 201h5v6h-5zM1122 201h1v16h-1zM1120 204h5v10h-5zM1150 180h1v13h-1zM1148 188h5v1h-5zM1164 181h1v19h-1zM1162 185h5v15h-5zM1178 192h1v9h-1zM1176 197h5v4h-5zM1185 204h1v18h-1zM1183 204h5v14h-5z" fill="#02e2f4"/>
<path d="M44 459h1v2h-1zM42 461h5v5h-5z M43 462v3h3v-3zM51 459h1v1h-1zM51 463h1v2h-1zM49 460h5v3h-5z M50 461v1h3v-1zM58 461h1v2h-1zM56 450h5v11h-5z M57 451v9h3v-9zM86 445h1v5h-1zM86 451h1v2h-1zM84 450h5v1h-5zM100 453h1v2h-1zM100 456h1v3h-1zM98 455h5v1h-5zM107 449h1v2h-1zM107 455h1v1h-1zM105 451h5v4h-5z M106 452v2h3v-2zM114 446h1v1h-1zM112 437h5v9h-5z M113 438v7h3v-7zM128 426h1v2h-1zM128 436h1v2h-1zM126 428h5v8h-5z M127 429v6h3v-6zM142 419h1v1h-1zM142 425h1v3h-1zM140 420h5v5h-5z M141 421v3h3v-3zM156 411h1v5h-1zM156 422h1v2h-1zM154 416h5v6h-5z M155 417v4h3v-4zM170 427h1v3h-1zM170 431h1v1h-1zM168 430h5v1h-5zM184 422h1v3h-1zM184 428h1v4h-1zM182 425h5v3h-5z M183 426v1h3v-1zM191 418h1v3h-1zM191 424h1v1h-1zM189 421h5v3h-5z M190 422v1h3v-1zM233 433h1v1h-1zM231 434h5v9h-5z M232 435v7h3v-7zM247 437h1v3h-1zM245 440h5v3h-5z M246 441v1h3v-1zM252 432h5v6h-5z M253 433v4h3v-4zM261 426h1v2h-1zM261 432h1v3h-1zM259 428h5v4h-5z M260 429v2h3v-2zM275 422h1v2h-1zM275 427h1v2h-1zM273 424h5v3h-5z M274 425v1h3v-1zM289 421h1v3h-1zM289 428h1v1h-1zM287 424h5v4h-5z M288 425v2h3v-2zM296 423h1v2h-1zM296 427h1v2h-1zM294 425h5v2h-5zM310 430h1v1h-1zM308 431h5v5h-5z M309 432v3h3v-3zM324 429h1v2h-1zM322 431h5v1h-5zM345 439h1v1h-1zM343 440h5v7h-5z M344 441v5h3v-5zM352 426h1v1h-1zM350 427h5v11h-5z M351 428v9h3v-9zM359 412h1v1h-1zM357 413h5v12h-5z M358 414v10h3v-10zM373 408h1v6h-1zM373 415h1v2h-1zM371 414h5v1h-5zM380 411h1v2h-1zM378 407h5v4h-5z M379 408v2h3v-2zM387 406h1v1h-1zM387 408h1v4h-1zM385 407h5v1h-5zM401 401h1v1h-1zM399 402h5v8h-5z M400 403v6h3v-6zM422 397h1v1h-1zM420 398h5v11h-5z M421 399v9h3v-9zM436 392h1v4h-1zM436 397h1v3h-1zM434 396h5v1h-5zM443 385h1v5h-1zM443 394h1v2h-1zM441 390h5v4h-5z M442 391v2h3v-2zM457 383h1v3h-1zM457 389h1v3h-1zM455 386h5v3h-5z M456 387v1h3v-1zM469 376h5v12h-5z M470 377v10h3v-10zM478 370h1v3h-1zM478 374h1v2h-1zM476 373h5v1h-5zM485 371h1v1h-1zM483 365h5v6h-5z M484 366v4h3v-4zM492 366h1v2h-1zM490 358h5v8h-5z M491 359v6h3v-6zM504 351h5v10h-5z M505 352v8h3v-8zM520 348h1v1h-1zM520 352h1v5h-1zM518 349h5v3h-5z M519 350v1h3v-1zM527 351h1v3h-1zM525 344h5v7h-5z M526 345v5h3v-5zM553 363h5v8h-5z M554 364v6h3v-6zM562 360h1v3h-1zM560 358h5v2h-5zM567 352h5v7h-5z M568 353v5h3v-5zM590 342h1v1h-1zM588 343h5v11h-5z M589 344v9h3v-9zM597 343h1v3h-1zM595 339h5v4h-5z M596 340v2h3v-2zM604 337h1v1h-1zM602 323h5v14h-5z M603 324v12h3v-12zM618 316h1v1h-1zM616 317h5v16h-5z M617 318v14h3v-14zM625 295h1v6h-1zM625 311h1v5h-1zM623 301h5v10h-5z M624 302v8h3v-8zM639 308h1v5h-1zM637 294h5v14h-5z M638 295v12h3v-12zM651 276h5v20h-5z M652 277v18h3v-18zM660 251h1v3h-1zM660 265h1v4h-1zM658 254h5v11h-5z M659 255v9h3v-9zM667 245h1v8h-1zM667 258h1v2h-1zM665 253h5v5h-5z M666 254v3h3v-3zM681 268h1v5h-1zM679 244h5v24h-5z M680 245v22h3v-22zM688 227h1v8h-1zM688 243h1v6h-1zM686 235h5v8h-5z M687 236v6h3v-6zM695 228h1v9h-1zM693 224h5v4h-5z M694 225v2h3v-2zM723 242h1v1h-1zM723 278h1v3h-1zM721 243h5v35h-5z M722 244v33h3v-33zM730 235h1v2h-1zM730 238h1v11h-1zM728 237h5v1h-5zM744 240h1v5h-1zM744 248h1v8h-1zM742 245h5v3h-5z M743 246v1h3v-1zM751 243h1v5h-1zM749 213h5v30h-5z M750 214v28h3v-28zM765 203h1v7h-1zM765 213h1v2h-1zM763 210h5v3h-5z M764 211v1h3v-1zM772 205h1v1h-1zM772 210h1v11h-1zM770 206h5v4h-5z M771 207v2h3v-2zM779 193h1v1h-1zM779 206h1v5h-1zM777 194h5v12h-5z M778 195v10h3v-10zM800 202h1v8h-1zM798 200h5v2h-5zM814 208h1v2h-1zM812 183h5v25h-5z M813 184v23h3v-23zM821 170h1v6h-1zM821 185h1v3h-1zM819 176h5v9h-5z M820 177v7h3v-7zM835 170h1v4h-1zM833 174h5v17h-5z M834 175v15h3v-15zM842 165h1v5h-1zM842 171h1v4h-1zM840 170h5v1h-5zM849 149h1v6h-1zM849 165h1v2h-1zM847 155h5v10h-5z M848 156v8h3v-8zM863 191h1v2h-1zM861 193h5v31h-5z M862 194v29h3v-29zM877 200h1v2h-1zM877 216h1v9h-1zM875 202h5v14h-5z M876 203v12h3v-12zM884 194h1v11h-1zM884 206h1v2h-1zM882 205h5v1h-5zM905 203h1v2h-1zM905 220h1v3h-1zM903 205h5v15h-5z M904 206v13h3v-13zM912 204h1v7h-1zM912 212h1v4h-1zM910 211h5v1h-5zM919 207h1v2h-1zM919 214h1v12h-1zM917 209h5v5h-5z M918 210v3h3v-3zM924 189h5v15h-5z M925 190v13h3v-13zM933 171h1v2h-1zM933 176h1v8h-1zM931 173h5v3h-5z M932 174v1h3v-1zM940 167h1v11h-1zM940 179h1v3h-1zM938 178h5v1h-5zM947 173h1v1h-1zM945 157h5v16h-5z M946 158v14h3v-14zM968 179h1v1h-1zM968 183h1v16h-1zM966 180h5v3h-5z M967 181v1h3v-1zM982 190h1v4h-1zM980 194h5v20h-5z M981 195v18h3v-18zM989 175h1v1h-1zM987 176h5v13h-5z M988 177v11h3v-11zM996 172h1v7h-1zM996 180h1v5h-1zM994 179h5v1h-5zM1024 173h1v1h-1zM1024 193h1v1h-1zM1022 174h5v19h-5z M1023 175v17h3v-17zM1038 190h1v5h-1zM1038 196h1v4h-1zM1036 195h5v1h-5zM1052 198h1v7h-1zM1052 206h1v4h-1zM1050 205h5v1h-5zM1080 220h1v8h-1zM1078 228h5v7h-5z M1079 229v5h3v-5zM1087 210h1v8h-1zM1087 229h1v1h-1zM1085 218h5v11h-5z M1086 219v9h3v-9zM1101 211h1v1h-1zM1101 220h1v4h-1zM1099 212h5v8h-5z M1100 213v6h3v-6zM1108 199h1v1h-1zM1108 208h1v3h-1zM1106 200h5v8h-5z M1107 201v6h3v-6zM1129 209h1v1h-1zM1129 214h1v6h-1zM1127 210h5v4h-5z M1128 211v2h3v-2zM1136 208h1v7h-1zM1134 199h5v9h-5z M1135 200v7h3v-7zM1143 181h1v4h-1zM1141 185h5v12h-5z M1142 186v10h3v-10zM1157 184h1v2h-1zM1157 191h1v9h-1zM1155 186h5v5h-5z M1156 187v3h3v-3zM1171 189h1v2h-1zM1171 196h1v8h-1zM1169 191h5v5h-5z M1170 192v3h3v-3zM1192 208h1v5h-1zM1190 213h5v4h-5z M1191 214v2h3v-2z" fill="#ff3232" fill-rule="evenodd"/>
<path d="M21 552h5v53h-5zM28 559h5v46h-5zM35 558h5v47h-5zM63 557h5v48h-5zM70 552h5v53h-5zM77 556h5v49h-5zM91 558h5v47h-5zM119 545h5v60h-5zM133 554h5v51h-5zM147 553h5v52h-5zM161 557h5v48h-5zM175 558h5v47h-5zM196 558h5v47h-5zM203 558h5v47h-5zM210 564h5v41h-5zM217 563h5v42h-5zM224 560h5v45h-5zM238 555h5v50h-5zM266 558h5v47h-5zM280 545h5v60h-5zM301 546h5v59h-5zM315 554h5v51h-5zM329 554h5v51h-5zM336 561h5v44h-5zM364 544h5v61h-5zM392 548h5v57h-5zM406 549h5v56h-5zM413 556h5v49h-5zM427 546h5v59h-5zM448 550h5v55h-5zM462 553h5v52h-5zM497 540h5v65h-5zM511 544h5v61h-5zM532 545h5v60h-5zM539 543h5v62h-5zM546 552h5v53h-5zM574 545h5v60h-5zM581 547h5v58h-5zM609 532h5v73h-5zM630 526h5v79h-5zM644 528h5v77h-5zM672 511h5v94h-5zM700 521h5v84h-5zM707 533h5v72h-5zM714 530h5v75h-5zM735 541h5v64h-5zM756 532h5v73h-5zM784 515h5v90h-5zM791 536h5v69h-5zM805 532h5v73h-5zM826 546h5v59h-5zM854 539h5v66h-5zM868 539h5v66h-5zM889 549h5v56h-5zM896 556h5v49h-5zM952 540h5v65h-5zM959 542h5v63h-5zM973 547h5v58h-5zM1001 541h5v64h-5zM1008 543h5v62h-5zM1015 543h5v62h-5zM1029 540h5v65h-5zM1043 539h5v66h-5zM1057 548h5v57h-5zM1064 537h5v68h-5zM1071 547h5v58h-5zM1092 551h5v54h-5zM1113 550h5v55h-5zM1120 548h5v57h-5zM1148 549h5v56h-5zM1162 546h5v59h-5zM1176 552h5v53h-5zM1183 549h5v56h-5z" fill="#02e2f4"/>
<path d="M42 563h5v42h-5z M43 564v40h3v-40zM49 564h5v41h-5z M50 565v39h3v-39zM56 560h5v45h-5z M57 561v43h3v-43zM84 557h5v48h-5z M85 558v46h3v-46zM98 562h5v43h-5z M99 563v41h3v-41zM105 558h5v47h-5z M106 559v45h3v-45zM112 551h5v54h-5z M113 552v52h3v-52zM126 551h5v54h-5z M127 552v52h3v-52zM140 555h5v50h-5z M141 556v48h3v-48zM154 552h5v53h-5z M155 553v51h3v-51zM168 559h5v46h-5z M169 560v44h3v-44zM182 555h5v50h-5z M183 556v48h3v-48zM189 556h5v49h-5z M190 557v47h3v-47zM231 553h5v52h-5z M232 554v50h3v-50zM245 558h5v47h-5z M246 559v45h3v-45zM252 555h5v50h-5z M253 556v48h3v-48zM259 552h5v53h-5z M260 553v51h3v-51zM273 553h5v52h-5z M274 554v50h3v-50zM287 554h5v51h-5z M288 555v49h3v-49zM294 554h5v51h-5z M295 555v49h3v-49zM308 557h5v48h-5z M309 558v46h3v-46zM322 555h5v50h-5z M323 556v48h3v-48zM343 559h5v46h-5z M344 560v44h3v-44zM350 549h5v56h-5z M351 550v54h3v-54zM357 544h5v61h-5z M358 545v59h3v-59zM371 546h5v59h-5z M372 547v57h3v-57zM378 548h5v57h-5z M379 549v55h3v-55zM385 547h5v58h-5z M386 548v56h3v-56zM399 551h5v54h-5z M400 552v52h3v-52zM420 549h5v56h-5z M421 550v54h3v-54zM434 546h5v59h-5z M435 547v57h3v-57zM441 542h5v63h-5z M442 543v61h3v-61zM455 544h5v61h-5z M456 545v59h3v-59zM469 551h5v54h-5z M470 552v52h3v-52zM476 550h5v55h-5z M477 551v53h3v-53zM483 543h5v62h-5z M484 544v60h3v-60zM490 539h5v66h-5z M491 540v64h3v-64zM504 542h5v63h-5z M505 543v61h3v-61zM518 547h5v58h-5z M519 548v56h3v-56zM525 547h5v58h-5z M526 548v56h3v-56zM553 555h5v50h-5z M554 556v48h3v-48zM560 551h5v54h-5z M561 552v52h3v-52zM567 546h5v59h-5z M568 547v57h3v-57zM588 545h5v60h-5z M589 546v58h3v-58zM595 545h5v60h-5z M596 546v58h3v-58zM602 538h5v67h-5z M603 539v65h3v-65zM616 538h5v67h-5z M617 539v65h3v-65zM623 521h5v84h-5z M624 522v82h3v-82zM637 530h5v75h-5z M638 531v73h3v-73zM651 530h5v75h-5z M652 531v73h3v-73zM658 515h5v90h-5z M659 516v88h3v-88zM665 524h5v81h-5z M666 525v79h3v-79zM679 516h5v89h-5z M680 517v87h3v-87zM686 529h5v76h-5z M687 530v74h3v-74zM693 529h5v76h-5z M694 530v74h3v-74zM721 536h5v69h-5z M722 537v67h3v-67zM728 536h5v69h-5z M729 537v67h3v-67zM742 545h5v60h-5z M743 546v58h3v-58zM749 535h5v70h-5z M750 536v68h3v-68zM763 538h5v67h-5z M764 539v65h3v-65zM770 530h5v75h-5z M771 531v73h3v-73zM777 533h5v72h-5z M778 534v70h3v-70zM798 544h5v61h-5z M799 545v59h3v-59zM812 544h5v61h-5z M813 545v59h3v-59zM819 543h5v62h-5z M820 544v60h3v-60zM833 548h5v57h-5z M834 549v55h3v-55zM840 549h5v56h-5z M841 550v54h3v-54zM847 538h5v67h-5z M848 539v65h3v-65zM861 542h5v63h-5z M862 543v61h3v-61zM875 549h5v56h-5z M876 550v54h3v-54zM882 552h5v53h-5z M883 553v51h3v-51zM903 551h5v54h-5z M904 552v52h3v-52zM910 555h5v50h-5z M911 556v48h3v-48zM917 553h5v52h-5z M918 554v50h3v-50zM924 550h5v55h-5z M925 551v53h3v-53zM931 544h5v61h-5z M932 545v59h3v-59zM938 547h5v58h-5z M939 548v56h3v-56zM945 543h5v62h-5z M946 544v60h3v-60zM966 545h5v60h-5z M967 546v58h3v-58zM980 546h5v59h-5z M981 547v57h3v-57zM987 545h5v60h-5z M988 546v58h3v-58zM994 547h5v58h-5z M995 548v56h3v-56zM1022 542h5v63h-5z M1023 543v61h3v-61zM1036 543h5v62h-5z M1037 544v60h3v-60zM1050 546h5v59h-5z M1051 547v57h3v-57zM1078 546h5v59h-5z M1079 547v57h3v-57zM1085 547h5v58h-5z M1086 548v56h3v-56zM1099 553h5v52h-5z M1100 554v50h3v-50zM1106 547h5v58h-5z M1107 548v56h3v-56zM1127 551h5v54h-5z M1128 552v52h3v-52zM1134 548h5v57h-5z M1135 549v55h3v-55zM1141 544h5v61h-5z M1142 545v59h3v-59zM1155 549h5v56h-5z M1156 550v54h3v-54zM1169 547h5v58h-5z M1170 548v56h3v-56zM1190 587h5v18h-5z M1191 588v16h3v-16z" fill="#ff3232" fill-rule="evenodd"/>
<path d="M65 717h1v3h-1zM72 713h1v7h-1zM79 711h1v9h-1zM86 709h1v11h-1zM93 709h1v11h-1zM100 709h1v11h-1zM107 708h1v12h-1zM114 704h1v16h-1zM121 701h1v19h-1zM128 698h1v22h-1zM135 699h1v21h-1zM142 696h1v24h-1zM149 695h1v25h-1zM156 695h1v25h-1zM163 699h1v21h-1zM170 703h1v17h-1zM177 706h1v14h-1zM184 708h1v12h-1zM191 709h1v11h-1zM198 710h1v10h-1zM205 714h1v6h-1zM212 718h1v2h-1zM268 719h1v1h-1zM275 717h1v3h-1zM282 717h1v3h-1zM289 716h1v4h-1zM296 716h1v4h-1zM303 718h1v2h-1zM310 719h1v1h-1zM317 719h1v1h-1zM359 717h1v3h-1zM366 714h1v6h-1zM373 712h1v8h-1zM380 710h1v10h-1zM387 709h1v11h-1zM394 709h1v11h-1zM401 709h1v11h-1zM408 709h1v11h-1zM415 712h1v8h-1zM422 711h1v9h-1zM429 711h1v9h-1zM436 712h1v8h-1zM443 711h1v9h-1zM450 711h1v9h-1zM457 711h1v9h-1zM464 712h1v8h-1zM471 711h1v9h-1zM478 710h1v10h-1zM485 708h1v12h-1zM492 706h1v14h-1zM499 706h1v14h-1zM506 706h1v14h-1zM513 707h1v13h-1zM520 708h1v12h-1zM527 708h1v12h-1zM534 711h1v9h-1zM541 718h1v2h-1zM604 717h1v3h-1zM611 716h1v4h-1zM618 713h1v7h-1zM625 708h1v12h-1zM632 706h1v14h-1zM639 704h1v16h-1zM646 704h1v16h-1zM653 701h1v19h-1zM660 695h1v25h-1zM667 693h1v27h-1zM674 697h1v23h-1zM681 696h1v24h-1zM688 696h1v24h-1zM695 695h1v25h-1zM702 702h1v18h-1zM709 710h1v10h-1zM765 719h1v1h-1zM772 717h1v3h-1zM779 715h1v5h-1zM786 717h1v3h-1zM793 719h1v1h-1zM821 719h1v1h-1zM849 717h1v3h-1zM947 715h1v5h-1zM954 714h1v6h-1zM961 717h1v3h-1zM968 719h1v1h-1zM1129 719h1v1h-1zM1136 715h1v5h-1zM1143 709h1v11h-1zM1150 706h1v14h-1zM1157 705h1v15h-1zM1164 708h1v12h-1zM1171 708h1v12h-1zM1178 712h1v8h-1zM1185 719h1v1h-1z" fill="#ff3232"/>
<path d="M23 721h1v30h-1zM30 721h1v22h-1zM37 721h1v16h-1zM44 721h1v11h-1zM51 721h1v7h-1zM58 721h1v1h-1zM219 721h1v1h-1zM226 721h1v4h-1zM233 721h1v4h-1zM240 721h1v4h-1zM247 721h1v5h-1zM254 721h1v3h-1zM261 721h1v1h-1zM324 721h1v1h-1zM331 721h1v3h-1zM338 721h1v5h-1zM345 721h1v6h-1zM352 721h1v3h-1zM548 721h1v3h-1zM555 721h1v6h-1zM562 721h1v7h-1zM569 721h1v6h-1zM576 721h1v6h-1zM583 721h1v7h-1zM590 721h1v5h-1zM597 721h1v2h-1zM716 721h1v4h-1zM723 721h1v4h-1zM730 721h1v4h-1zM737 721h1v7h-1zM744 721h1v10h-1zM751 721h1v3h-1zM758 721h1v1h-1zM800 721h1v1h-1zM807 721h1v3h-1zM814 721h1v1h-1zM828 721h1v3h-1zM835 721h1v2h-1zM842 721h1v1h-1zM856 721h1v3h-1zM863 721h1v11h-1zM870 721h1v22h-1zM877 721h1v26h-1zM884 721h1v28h-1zM891 721h1v36h-1zM898 721h1v38h-1zM905 721h1v33h-1zM912 721h1v30h-1zM919 721h1v26h-1zM926 721h1v18h-1zM933 721h1v8h-1zM940 721h1v3h-1zM975 721h1v5h-1zM982 721h1v9h-1zM989 721h1v6h-1zM996 721h1v6h-1zM1003 721h1v4h-1zM1010 721h1v7h-1zM1017 721h1v9h-1zM1024 721h1v6h-1zM1031 721h1v9h-1zM1038 721h1v12h-1zM1045 721h1v15h-1zM1052 721h1v17h-1zM1059 721h1v19h-1zM1066 721h1v29h-1zM1073 721h1v33h-1zM1080 721h1v30h-1zM1087 721h1v23h-1zM1094 721h1v19h-1zM1101 721h1v13h-1zM1108 721h1v5h-1zM1115 721h1v1h-1zM1122 721h1v1h-1zM1192 721h1v2h-1z" fill="#00e600"/>
<polyline points="23.5,405.0 30.5,405.4 37.5,405.8 44.5,406.3 51.5,406.7 58.5,407.1 65.5,407.5 72.5,407.9 79.5,408.3 86.5,408.8 93.5,409.2 100.5,409.6 107.5,410.0 114.5,410.4 121.5,410.8 128.5,411.2 135.5,411.6 142.5,412.1 149.5,412.9 156.5,413.6 163.5,414.3 170.5,415.1 177.5,415.8 184.5,416.5 191.5,417.1 198.5,417.7 205.5,418.3 212.5,419.0 219.5,419.8 226.5,420.7 233.5,421.6 240.5,422.6 247.5,423.5 254.5,424.4 261.5,425.4 268.5,426.4 275.5,427.4 282.5,428.3 289.5,428.9 296.5,429.5 303.5,430.1 310.5,430.7 317.5,431.2 324.5,431.8 331.5,432.6 338.5,433.9 345.5,435.2 352.5,436.6 359.5,437.3 366.5,437.6 373.5,438.0 380.5,438.1 387.5,438.1 394.5,438.1 401.5,437.4 408.5,436.3 415.5,435.1 422.5,433.8 429.5,432.4 436.5,431.1 443.5,430.1 450.5,429.0 457.5,427.8 464.5,426.6 471.5,425.2 478.5,423.9 485.5,422.4 492.5,420.9 499.5,419.4 506.5,417.7 513.5,416.0 520.5,414.3 527.5,412.5 534.5,411.0 541.5,409.8 548.5,408.8 555.5,407.6 562.5,406.6 569.5,405.5 576.5,404.4 583.5,403.2 590.5,401.8 597.5,400.3 604.5,398.6 611.5,397.1 618.5,395.3 625.5,393.1 632.5,390.9 639.5,388.5 646.5,386.0 653.5,383.4 660.5,380.3 667.5,377.2 674.5,374.4 681.5,371.3 688.5,368.1 695.5,364.8 702.5,361.7 709.5,358.8 716.5,356.4 723.5,353.2 730.5,350.0 737.5,347.0 744.5,343.9 751.5,340.1 758.5,336.4 765.5,332.5 772.5,328.9 779.5,325.2 786.5,321.7 793.5,318.2 800.5,314.7 807.5,311.3 814.5,307.5 821.5,303.8 828.5,300.3 835.5,296.4 842.5,292.6 849.5,288.5 856.5,284.9 863.5,281.7 870.5,278.8 877.5,275.7 884.5,272.7 891.5,270.3 898.5,267.9 905.5,265.2 912.5,262.7 919.5,260.2 926.5,257.5 933.5,254.5 940.5,251.7 947.5,248.6 954.5,245.6 961.5,242.5 968.5,239.4 975.5,236.6 982.5,233.9 989.5,231.0 996.5,228.1 1003.5,225.1 1010.5,222.5 1017.5,220.0 1024.5,217.5 1031.5,215.3 1038.5,213.2 1045.5,211.6 1052.5,210.0 1059.5,208.6 1066.5,207.8 1073.5,207.2 1080.5,206.8 1087.5,206.2 1094.5,205.5 1101.5,204.9 1108.5,204.4 1115.5,204.1 1122.5,203.5 1129.5,202.9 1136.5,201.6 1143.5,200.6 1150.5,199.8 1157.5,198.7 1164.5,198.0 1171.5,197.6 1178.5,197.3 1185.5,197.4 1192.5,197.5" fill="none" stroke="#02e2f4" stroke-width="1"/>
<polyline points="23.5,403.0 30.5,405.7 37.5,408.4 44.5,411.0 51.5,413.7 58.5,416.4 65.5,418.9 72.5,421.4 79.5,423.9 86.5,426.4 93.5,428.8 100.5,431.3 107.5,433.6 114.5,435.6 121.5,437.7 128.5,439.8 135.5,441.0 142.5,442.1 149.5,443.1 156.5,444.0 163.5,444.9 170.5,445.7 177.5,446.6 184.5,446.8 191.5,446.5 198.5,445.2 205.5,443.8 212.5,442.5 219.5,441.3 226.5,440.3 233.5,439.7 240.5,439.2 247.5,438.5 254.5,437.6 261.5,436.5 268.5,435.7 275.5,434.8 282.5,434.1 289.5,433.2 296.5,432.4 303.5,431.6 310.5,430.8 317.5,430.1 324.5,429.9 331.5,430.0 338.5,430.5 345.5,430.7 352.5,430.9 359.5,430.7 366.5,430.7 373.5,430.2 380.5,429.5 387.5,428.7 394.5,428.2 401.5,427.6 408.5,426.9 415.5,426.1 422.5,424.9 429.5,423.5 436.5,422.0 443.5,420.5 450.5,418.9 457.5,417.1 464.5,415.6 471.5,413.8 478.5,412.0 485.5,410.1 492.5,407.7 499.5,405.6 506.5,403.1 513.5,400.4 520.5,397.7 527.5,394.9 534.5,392.1 541.5,389.7 548.5,387.1 555.5,384.6 562.5,382.3 569.5,380.2 576.5,378.2 583.5,376.2 590.5,374.1 597.5,371.8 604.5,368.9 611.5,366.5 618.5,363.6 625.5,360.0 632.5,356.8 639.5,353.4 646.5,350.0 653.5,346.2 660.5,341.7 667.5,337.3 674.5,333.2 681.5,328.8 688.5,324.2 695.5,319.5 702.5,315.7 709.5,312.1 716.5,309.6 723.5,306.0 730.5,302.3 737.5,299.1 744.5,295.6 751.5,290.6 758.5,285.6 765.5,280.5 772.5,275.5 779.5,270.2 786.5,265.2 793.5,260.2 800.5,255.4 807.5,250.8 814.5,246.1 821.5,241.0 828.5,236.9 835.5,232.7 842.5,228.3 849.5,223.6 856.5,219.9 863.5,217.1 870.5,215.9 877.5,214.2 884.5,212.2 891.5,211.9 898.5,211.5 905.5,210.8 912.5,209.7 919.5,208.4 926.5,205.4 933.5,203.1 940.5,201.1 947.5,198.0 954.5,195.5 961.5,194.4 968.5,193.2 975.5,192.7 982.5,192.3 989.5,191.7 996.5,190.9 1003.5,190.0 1010.5,189.6 1017.5,189.3 1024.5,189.0 1031.5,189.5 1038.5,189.6 1045.5,190.6 1052.5,191.7 1059.5,193.6 1066.5,195.7 1073.5,197.3 1080.5,197.7 1087.5,198.2 1094.5,198.8 1101.5,198.0 1108.5,197.3 1115.5,197.3 1122.5,197.4 1129.5,197.4 1136.5,197.7 1143.5,198.1 1150.5,198.5 1157.5,199.4 1164.5,200.4 1171.5,200.8 1178.5,201.4 1185.5,202.1 1192.5,202.7" fill="none" stroke="#00e600" stroke-width="1"/>
<polyline points="23.5,415.6 30.5,420.0 37.5,424.4 44.5,428.9 51.5,433.2 58.5,436.2 65.5,439.3 72.5,442.3 79.5,445.2 86.5,447.6 93.5,450.0 100.5,452.4 107.5,454.7 114.5,456.9 121.5,458.1 128.5,455.1 135.5,451.9 142.5,449.0 149.5,446.9 156.5,444.9 163.5,443.7 170.5,442.5 177.5,441.0 184.5,439.2 191.5,437.2 198.5,435.9 205.5,434.9 212.5,434.2 219.5,433.6 226.5,433.2 233.5,432.2 240.5,431.4 247.5,430.8 254.5,430.6 261.5,430.2 268.5,430.2 275.5,429.8 282.5,430.2 289.5,430.4 296.5,430.9 303.5,431.1 310.5,431.2 317.5,431.2 324.5,431.4 331.5,432.3 338.5,433.2 345.5,433.6 352.5,433.2 359.5,431.8 366.5,430.5 373.5,429.5 380.5,427.9 387.5,426.3 394.5,425.2 401.5,423.9 408.5,422.7 415.5,421.9 422.5,420.4 429.5,419.1 436.5,417.6 443.5,415.5 450.5,413.4 457.5,411.3 464.5,409.1 471.5,406.0 478.5,402.5 485.5,398.8 492.5,395.4 499.5,392.7 506.5,389.5 513.5,386.4 520.5,383.5 527.5,380.4 534.5,377.3 541.5,375.4 548.5,373.5 555.5,371.2 562.5,369.2 569.5,366.9 576.5,364.8 583.5,363.0 590.5,360.7 597.5,358.4 604.5,355.2 611.5,352.9 618.5,350.1 625.5,346.9 632.5,344.1 639.5,340.8 646.5,338.0 653.5,334.2 660.5,329.4 667.5,324.9 674.5,320.7 681.5,314.7 688.5,308.1 695.5,301.2 702.5,295.5 709.5,290.4 716.5,286.7 723.5,281.1 730.5,275.8 737.5,271.2 744.5,267.4 751.5,261.5 758.5,256.5 765.5,251.9 772.5,247.1 779.5,242.1 786.5,237.6 793.5,234.1 800.5,231.3 807.5,228.7 814.5,224.6 821.5,221.2 828.5,219.1 835.5,216.6 842.5,212.9 849.5,208.2 856.5,203.4 863.5,200.8 870.5,199.9 877.5,197.6 884.5,195.5 891.5,196.6 898.5,197.0 905.5,196.7 912.5,196.9 919.5,197.7 926.5,196.9 933.5,195.4 940.5,194.3 947.5,192.1 954.5,191.4 961.5,191.6 968.5,191.0 975.5,192.0 982.5,193.2 989.5,194.3 996.5,194.1 1003.5,193.3 1010.5,191.8 1017.5,191.3 1024.5,189.8 1031.5,187.7 1038.5,186.2 1045.5,186.2 1052.5,185.9 1059.5,186.0 1066.5,188.8 1073.5,192.3 1080.5,194.8 1087.5,197.9 1094.5,200.4 1101.5,202.0 1108.5,203.0 1115.5,203.5 1122.5,204.5 1129.5,206.2 1136.5,207.2 1143.5,207.7 1150.5,207.6 1157.5,207.3 1164.5,208.6 1171.5,208.5 1178.5,208.7 1185.5,209.4 1192.5,209.8" fill="none" stroke="#ff80ff" stroke-width="1"/>
<polyline points="23.5,447.0 30.5,451.9 37.5,456.8 44.5,461.2 51.5,465.6 58.5,462.6 65.5,459.0 72.5,456.1 79.5,454.6 86.5,454.5 93.5,454.8 100.5,454.9 107.5,454.0 114.5,451.6 121.5,449.1 128.5,446.8 135.5,444.8 142.5,442.0 149.5,438.8 156.5,435.4 163.5,432.7 170.5,430.2 177.5,428.0 184.5,426.8 191.5,425.4 198.5,425.0 205.5,424.9 212.5,426.4 219.5,428.4 226.5,431.0 233.5,431.7 240.5,432.6 247.5,433.6 254.5,434.4 261.5,435.1 268.5,435.4 275.5,434.6 282.5,433.9 289.5,432.4 296.5,430.7 303.5,430.5 310.5,429.8 317.5,428.7 324.5,428.5 331.5,429.5 338.5,430.9 345.5,432.6 352.5,432.4 359.5,431.3 366.5,430.3 373.5,428.5 380.5,426.1 387.5,423.9 394.5,421.8 401.5,418.2 408.5,414.4 415.5,411.3 422.5,408.4 429.5,406.9 436.5,404.9 443.5,402.5 450.5,400.7 457.5,398.6 464.5,396.3 471.5,393.7 478.5,390.7 485.5,386.3 492.5,382.3 499.5,378.5 506.5,374.1 513.5,370.2 520.5,366.3 527.5,362.1 534.5,358.3 541.5,357.1 548.5,356.4 555.5,356.1 562.5,356.1 569.5,355.3 576.5,355.5 583.5,355.8 590.5,355.2 597.5,354.7 604.5,352.2 611.5,348.8 618.5,343.9 625.5,337.7 632.5,332.1 639.5,326.4 646.5,320.5 653.5,312.5 660.5,303.7 667.5,295.0 674.5,289.1 681.5,280.6 688.5,272.4 695.5,264.7 702.5,259.0 709.5,254.5 716.5,252.9 723.5,249.7 730.5,248.0 737.5,247.5 744.5,245.6 751.5,242.4 758.5,240.5 765.5,239.2 772.5,235.3 779.5,229.7 786.5,222.3 793.5,218.4 800.5,214.7 807.5,209.9 814.5,203.7 821.5,199.9 828.5,197.7 835.5,194.1 842.5,190.5 849.5,186.6 856.5,184.4 863.5,183.3 870.5,185.1 877.5,185.3 884.5,187.4 891.5,193.2 898.5,196.2 905.5,199.3 912.5,203.3 919.5,208.8 926.5,209.5 933.5,207.5 940.5,203.5 947.5,199.0 954.5,195.4 961.5,190.1 968.5,185.7 975.5,184.8 982.5,183.2 989.5,179.8 996.5,178.8 1003.5,179.1 1010.5,180.1 1017.5,183.6 1024.5,184.1 1031.5,185.3 1038.5,186.8 1045.5,187.6 1052.5,188.7 1059.5,192.2 1066.5,198.8 1073.5,205.4 1080.5,209.5 1087.5,212.1 1094.5,216.8 1101.5,218.8 1108.5,219.3 1115.5,219.5 1122.5,220.2 1129.5,220.1 1136.5,215.5 1143.5,209.9 1150.5,205.8 1157.5,202.6 1164.5,200.4 1171.5,198.3 1178.5,198.2 1185.5,199.2 1192.5,199.3" fill="none" stroke="#ffff00" stroke-width="1"/>
<polyline points="23.5,468.7 30.5,462.0 37.5,458.0 44.5,457.6 51.5,457.7 58.5,457.6 65.5,457.4 72.5,455.0 79.5,453.2 86.5,451.3 93.5,452.0 100.5,452.4 107.5,453.0 114.5,450.1 121.5,446.9 128.5,441.7 135.5,437.3 142.5,431.1 149.5,427.5 156.5,423.8 163.5,423.7 170.5,423.0 177.5,424.9 184.5,426.0 191.5,427.0 198.5,426.3 205.5,426.8 212.5,427.9 219.5,430.9 226.5,435.0 233.5,437.1 240.5,438.4 247.5,439.4 254.5,437.9 261.5,435.2 268.5,433.7 275.5,430.9 282.5,428.5 289.5,426.9 296.5,426.3 303.5,427.3 310.5,428.7 317.5,428.8 324.5,430.1 331.5,432.6 338.5,434.6 345.5,436.4 352.5,436.0 359.5,432.4 366.5,428.0 373.5,422.4 380.5,415.8 387.5,411.8 394.5,411.2 401.5,408.5 408.5,406.4 415.5,406.8 422.5,405.0 429.5,402.5 436.5,401.3 443.5,398.7 450.5,394.7 457.5,392.3 464.5,390.1 471.5,386.2 478.5,382.6 485.5,378.0 492.5,372.4 499.5,367.0 506.5,362.0 513.5,357.8 520.5,354.6 527.5,351.9 534.5,349.5 541.5,352.1 548.5,354.9 555.5,357.6 562.5,360.3 569.5,361.1 576.5,358.9 583.5,356.8 590.5,352.8 597.5,349.0 604.5,343.3 611.5,338.6 618.5,331.0 625.5,322.7 632.5,315.2 639.5,309.4 646.5,302.3 653.5,294.1 660.5,284.7 667.5,274.9 674.5,268.9 681.5,259.0 688.5,250.8 695.5,244.8 702.5,243.1 709.5,240.2 716.5,246.9 723.5,248.6 730.5,251.2 737.5,251.8 744.5,251.0 751.5,238.0 758.5,232.5 765.5,227.1 772.5,218.7 779.5,208.5 786.5,206.7 793.5,204.4 800.5,202.2 807.5,201.0 814.5,198.8 821.5,193.2 828.5,191.1 835.5,186.0 842.5,180.1 849.5,174.4 856.5,175.6 863.5,175.4 870.5,184.1 877.5,190.4 884.5,200.4 891.5,210.8 898.5,217.0 905.5,214.4 912.5,216.2 919.5,217.1 926.5,208.2 933.5,198.0 940.5,192.5 947.5,181.8 954.5,173.7 961.5,172.0 968.5,173.4 975.5,177.1 982.5,184.5 989.5,185.9 996.5,185.6 1003.5,184.8 1010.5,183.2 1017.5,182.6 1024.5,182.3 1031.5,185.0 1038.5,188.8 1045.5,192.0 1052.5,194.8 1059.5,202.1 1066.5,212.7 1073.5,222.1 1080.5,227.0 1087.5,229.5 1094.5,231.4 1101.5,224.8 1108.5,216.5 1115.5,212.0 1122.5,211.0 1129.5,208.9 1136.5,206.2 1143.5,203.2 1150.5,199.5 1157.5,194.2 1164.5,192.0 1171.5,190.3 1178.5,193.2 1185.5,199.0 1192.5,204.4" fill="none" stroke="#ffffff" stroke-width="1"/>
<polyline points="23.5,550.4 30.5,550.4 37.5,550.4 44.5,549.5 51.5,550.5 58.5,552.0 65.5,553.5 72.5,555.0 79.5,557.0 86.5,557.8 93.5,558.4 100.5,558.7 107.5,558.8 114.5,557.5 121.5,555.6 128.5,554.7 135.5,554.4 142.5,554.8 149.5,554.5 156.5,554.0 163.5,553.9 170.5,553.6 177.5,553.6 184.5,554.0 191.5,555.1 198.5,555.8 205.5,556.1 212.5,557.0 219.5,558.0 226.5,558.7 233.5,558.3 240.5,557.9 247.5,557.9 254.5,557.9 261.5,557.5 268.5,557.5 275.5,557.0 282.5,555.1 289.5,554.2 296.5,553.6 303.5,552.9 310.5,553.1 317.5,552.8 324.5,552.8 331.5,553.0 338.5,553.3 345.5,553.9 352.5,554.3 359.5,553.3 366.5,552.3 373.5,552.3 380.5,551.4 387.5,550.7 394.5,550.0 401.5,549.7 408.5,548.5 415.5,548.2 422.5,548.2 429.5,548.4 436.5,548.6 443.5,548.2 450.5,548.4 457.5,548.1 464.5,548.6 471.5,548.6 478.5,548.7 485.5,547.4 492.5,546.4 499.5,545.8 506.5,545.4 513.5,545.6 520.5,545.3 527.5,545.6 534.5,544.8 541.5,544.0 548.5,544.2 555.5,545.4 562.5,546.6 569.5,547.2 576.5,547.5 583.5,547.8 590.5,547.6 597.5,547.4 604.5,546.7 611.5,545.6 618.5,544.2 625.5,540.8 632.5,538.3 639.5,536.7 646.5,535.0 653.5,533.3 660.5,530.3 667.5,528.2 674.5,525.5 681.5,524.0 688.5,523.0 695.5,523.9 702.5,523.4 709.5,523.6 716.5,523.9 723.5,524.5 730.5,526.5 737.5,528.2 744.5,531.6 751.5,533.5 758.5,533.8 765.5,534.8 772.5,535.6 779.5,535.6 786.5,534.1 793.5,534.1 800.5,535.0 807.5,534.0 814.5,534.0 821.5,534.8 828.5,536.1 835.5,537.1 842.5,539.0 849.5,539.5 856.5,541.9 863.5,542.5 870.5,542.0 877.5,543.7 884.5,544.5 891.5,545.1 898.5,546.1 905.5,546.4 912.5,547.0 919.5,548.5 926.5,549.6 933.5,549.8 940.5,550.6 947.5,550.0 954.5,548.8 961.5,548.1 968.5,547.0 975.5,546.6 982.5,545.7 989.5,544.9 996.5,544.6 1003.5,544.3 1010.5,543.9 1017.5,543.9 1024.5,544.1 1031.5,543.9 1038.5,543.7 1045.5,542.9 1052.5,542.9 1059.5,543.2 1066.5,542.2 1073.5,542.8 1080.5,543.1 1087.5,543.5 1094.5,544.4 1101.5,545.7 1108.5,546.1 1115.5,547.2 1122.5,547.4 1129.5,547.7 1136.5,548.9 1143.5,548.5 1150.5,548.9 1157.5,549.0 1164.5,548.5 1171.5,548.0 1178.5,548.5 1185.5,548.4 1192.5,552.2" fill="none" stroke="#ffffff" stroke-width="1"/>
<polyline points="23.5,542.3 30.5,545.5 37.5,550.0 44.5,555.0 51.5,559.2 58.5,560.9 65.5,560.5 72.5,559.3 79.5,557.9 86.5,556.4 93.5,555.9 100.5,556.9 107.5,558.2 114.5,557.2 121.5,554.9 128.5,553.5 135.5,551.9 142.5,551.3 149.5,551.7 156.5,553.2 163.5,554.4 170.5,555.4 177.5,555.9 184.5,556.4 191.5,557.1 198.5,557.2 205.5,556.9 212.5,558.1 219.5,559.6 226.5,560.4 233.5,559.5 240.5,559.0 247.5,557.7 254.5,556.2 261.5,554.6 268.5,555.5 275.5,555.1 282.5,552.6 289.5,552.3 296.5,552.7 303.5,550.4 310.5,551.2 317.5,553.0 324.5,553.3 331.5,553.3 338.5,556.3 345.5,556.7 352.5,555.7 359.5,553.4 366.5,551.4 373.5,548.4 380.5,546.2 387.5,545.8 394.5,546.6 401.5,548.0 408.5,548.6 415.5,550.2 422.5,550.6 429.5,550.2 436.5,549.2 443.5,547.8 450.5,546.6 457.5,545.6 464.5,547.0 471.5,548.0 478.5,549.6 485.5,548.2 492.5,547.2 499.5,544.6 506.5,542.8 513.5,541.6 520.5,542.4 527.5,544.0 534.5,545.0 541.5,545.2 548.5,546.8 555.5,548.4 562.5,549.2 569.5,549.4 576.5,549.8 583.5,548.8 590.5,546.8 597.5,545.6 604.5,544.0 611.5,541.4 618.5,539.6 625.5,534.8 632.5,531.0 639.5,529.4 646.5,528.6 653.5,527.0 660.5,525.8 667.5,525.5 674.5,521.7 681.5,519.3 688.5,519.1 695.5,521.9 702.5,521.2 709.5,525.6 716.5,528.4 723.5,529.8 730.5,531.2 737.5,535.2 744.5,537.6 751.5,538.6 758.5,537.8 765.5,538.3 772.5,536.1 779.5,533.7 786.5,529.7 793.5,530.5 800.5,531.6 807.5,532.0 814.5,534.2 821.5,539.8 828.5,541.8 835.5,542.6 842.5,546.0 849.5,544.8 856.5,544.0 863.5,543.2 870.5,541.4 877.5,541.4 884.5,544.2 891.5,546.2 898.5,549.0 905.5,551.4 912.5,552.6 919.5,552.8 926.5,553.0 933.5,550.6 940.5,549.8 947.5,547.4 954.5,544.8 961.5,543.2 968.5,543.4 975.5,543.4 982.5,544.0 989.5,545.0 996.5,545.9 1003.5,545.1 1010.5,544.3 1017.5,543.7 1024.5,543.1 1031.5,541.8 1038.5,542.2 1045.5,541.4 1052.5,542.0 1059.5,543.2 1066.5,542.6 1073.5,543.4 1080.5,544.8 1087.5,545.0 1094.5,545.6 1101.5,548.8 1108.5,548.8 1115.5,549.6 1122.5,549.8 1129.5,549.8 1136.5,548.9 1143.5,548.3 1150.5,548.1 1157.5,548.3 1164.5,547.3 1171.5,547.0 1178.5,548.6 1185.5,548.6 1192.5,556.2" fill="none" stroke="#ffff00" stroke-width="1"/>
<polyline points="23.5,748.4 30.5,751.1 37.5,753.1 44.5,754.6 51.5,755.5 58.5,755.6 65.5,755.2 72.5,754.3 79.5,753.1 86.5,751.7 93.5,750.3 100.5,749.0 107.5,747.5 114.5,745.6 121.5,743.3 128.5,740.6 135.5,737.9 142.5,734.9 149.5,731.8 156.5,728.7 163.5,726.1 170.5,724.0 177.5,722.3 184.5,720.8 191.5,719.4 198.5,718.2 205.5,717.5 212.5,717.2 219.5,717.3 226.5,717.9 233.5,718.3 240.5,718.9 247.5,719.5 254.5,719.9 261.5,720.0 268.5,719.9 275.5,719.5 282.5,719.2 289.5,718.7 296.5,718.2 303.5,718.0 310.5,717.9 317.5,717.9 324.5,718.0 331.5,718.3 338.5,718.9 345.5,719.7 352.5,720.0 359.5,719.6 366.5,718.9 373.5,717.9 380.5,716.6 387.5,715.1 394.5,713.8 401.5,712.4 408.5,711.0 415.5,710.0 422.5,708.9 429.5,707.8 436.5,706.7 443.5,705.6 450.5,704.5 457.5,703.3 464.5,702.3 471.5,701.2 478.5,699.9 485.5,698.3 492.5,696.6 499.5,694.9 506.5,693.1 513.5,691.4 520.5,689.9 527.5,688.4 534.5,687.3 541.5,687.0 548.5,687.4 555.5,688.2 562.5,689.1 569.5,689.9 576.5,690.7 583.5,691.6 590.5,692.2 597.5,692.5 604.5,692.1 611.5,691.6 618.5,690.7 625.5,689.1 632.5,687.3 639.5,685.3 646.5,683.3 653.5,680.9 660.5,677.8 667.5,674.4 674.5,671.5 681.5,668.6 688.5,665.5 695.5,662.3 702.5,660.0 709.5,658.7 716.5,659.2 723.5,659.7 730.5,660.2 737.5,661.2 744.5,662.4 751.5,662.7 758.5,662.8 765.5,662.6 772.5,662.3 779.5,661.6 786.5,661.2 793.5,661.1 800.5,661.2 807.5,661.6 814.5,661.8 821.5,661.6 828.5,662.0 835.5,662.2 842.5,662.3 849.5,661.9 856.5,662.2 863.5,663.6 870.5,666.4 877.5,669.6 884.5,673.0 891.5,677.6 898.5,682.3 905.5,686.4 912.5,690.1 919.5,693.4 926.5,695.7 933.5,696.7 940.5,697.2 947.5,696.5 954.5,695.7 961.5,695.3 968.5,695.2 975.5,695.8 982.5,696.9 989.5,697.7 996.5,698.4 1003.5,698.9 1010.5,699.8 1017.5,701.0 1024.5,701.8 1031.5,703.0 1038.5,704.4 1045.5,706.3 1052.5,708.5 1059.5,710.9 1066.5,714.5 1073.5,718.6 1080.5,722.3 1087.5,725.2 1094.5,727.6 1101.5,729.2 1108.5,729.8 1115.5,729.9 1122.5,729.9 1129.5,729.8 1136.5,729.2 1143.5,727.8 1150.5,726.1 1157.5,724.1 1164.5,722.6 1171.5,721.2 1178.5,720.1 1185.5,720.0 1192.5,720.2" fill="none" stroke="#ffff00" stroke-width="1"/>
<polyline points="23.5,763.5 30.5,761.9 37.5,761.2 44.5,760.3 51.5,759.0 58.5,756.0 65.5,753.6 72.5,750.6 79.5,748.5 86.5,746.2 93.5,744.8 100.5,743.6 107.5,741.7 114.5,737.7 121.5,734.0 128.5,729.7 135.5,727.2 142.5,722.9 149.5,719.5 156.5,716.2 163.5,715.6 170.5,715.6 177.5,715.5 184.5,714.8 191.5,713.7 198.5,713.4 205.5,714.5 212.5,716.0 219.5,718.0 226.5,719.9 233.5,720.2 240.5,721.1 247.5,722.1 254.5,721.5 261.5,720.4 268.5,719.4 275.5,718.0 282.5,717.8 289.5,716.9 296.5,716.4 303.5,717.2 310.5,717.6 317.5,717.8 324.5,718.2 331.5,719.6 338.5,721.5 345.5,722.6 352.5,721.3 359.5,718.0 366.5,715.8 373.5,713.9 380.5,711.4 387.5,709.4 394.5,708.6 401.5,706.7 408.5,705.6 415.5,705.9 422.5,704.4 429.5,703.4 436.5,702.5 443.5,701.1 450.5,700.0 457.5,698.8 464.5,698.4 471.5,696.4 478.5,694.6 485.5,692.3 492.5,689.6 499.5,688.1 506.5,685.9 513.5,684.7 520.5,683.7 527.5,682.5 534.5,682.7 541.5,685.9 548.5,689.0 555.5,691.4 562.5,692.8 569.5,693.2 576.5,693.9 583.5,695.2 590.5,694.5 597.5,693.6 604.5,690.6 611.5,689.6 618.5,687.1 625.5,682.9 632.5,680.1 639.5,677.2 646.5,675.3 653.5,671.4 660.5,665.2 667.5,660.9 674.5,660.0 681.5,656.7 688.5,653.3 695.5,649.6 702.5,650.9 709.5,653.6 716.5,661.1 723.5,661.9 730.5,662.2 737.5,664.9 744.5,667.2 751.5,664.2 758.5,663.1 765.5,661.9 772.5,660.9 779.5,658.8 786.5,659.5 793.5,660.8 800.5,661.8 807.5,663.2 814.5,662.3 821.5,660.9 828.5,663.5 835.5,663.0 842.5,662.5 849.5,660.3 856.5,663.8 863.5,668.9 870.5,677.6 877.5,682.3 884.5,686.9 891.5,695.7 898.5,701.3 905.5,702.7 912.5,704.9 919.5,706.7 926.5,704.9 933.5,700.9 940.5,698.8 947.5,694.0 954.5,692.5 961.5,693.6 968.5,694.7 975.5,698.4 982.5,701.3 989.5,700.8 996.5,701.1 1003.5,701.1 1010.5,703.3 1017.5,705.7 1024.5,705.0 1031.5,707.6 1038.5,710.3 1045.5,713.9 1052.5,717.1 1059.5,720.5 1066.5,728.9 1073.5,734.8 1080.5,737.1 1087.5,736.9 1094.5,737.0 1101.5,735.6 1108.5,732.3 1115.5,730.5 1122.5,730.1 1129.5,729.2 1136.5,726.6 1143.5,722.3 1150.5,719.1 1157.5,716.5 1164.5,716.6 1171.5,715.4 1178.5,716.0 1185.5,719.3 1192.5,721.3" fill="none" stroke="#ffffff" stroke-width="1"/>
<g font-family="Liberation Sans, sans-serif" font-size="11.5" text-anchor="middle" stroke-width="0.15" paint-order="stroke"><text x="105.5" y="441.7" fill="#ff00ff" stroke="#ff00ff">1</text><text x="112.5" y="429.2" fill="#ff00ff" stroke="#ff00ff">2</text><text x="119.5" y="416.2" fill="#ff00ff" stroke="#ff00ff">3</text><text x="126.5" y="418.2" fill="#ff00ff" stroke="#ff00ff">4</text><text x="133.5" y="421.7" fill="#ff00ff" stroke="#ff00ff">5</text><text x="140.5" y="411.7" fill="#ff00ff" stroke="#ff00ff">6</text><text x="147.5" y="404.7" fill="#ff00ff" stroke="#ff00ff">7</text><text x="154.5" y="403.2" fill="#ff00ff" stroke="#ff00ff">8</text><text x="161.5" y="410.2" fill="#00dc00" stroke="#00dc00" font-weight="bold">9</text><text x="350.5" y="418.2" fill="#ff00ff" stroke="#ff00ff">1</text><text x="357.5" y="404.2" fill="#ff00ff" stroke="#ff00ff">2</text><text x="364.5" y="401.2" fill="#ff00ff" stroke="#ff00ff">3</text><text x="371.5" y="400.2" fill="#ff00ff" stroke="#ff00ff">4</text><text x="378.5" y="399.2" fill="#ff00ff" stroke="#ff00ff">5</text><text x="385.5" y="398.2" fill="#ff00ff" stroke="#ff00ff">6</text><text x="392.5" y="400.2" fill="#ff00ff" stroke="#ff00ff">7</text><text x="399.5" y="393.2" fill="#ff00ff" stroke="#ff00ff">8</text><text x="406.5" y="388.2" fill="#00dc00" stroke="#00dc00" font-weight="bold">9</text><text x="420.5" y="389.2" fill="#ff00ff" stroke="#ff00ff">1</text><text x="427.5" y="385.2" fill="#ff00ff" stroke="#ff00ff">2</text><text x="434.5" y="384.2" fill="#ff00ff" stroke="#ff00ff">3</text><text x="441.5" y="377.2" fill="#ff00ff" stroke="#ff00ff">4</text><text x="448.5" y="380.2" fill="#ff00ff" stroke="#ff00ff">5</text><text x="455.5" y="375.2" fill="#ff00ff" stroke="#ff00ff">6</text><text x="462.5" y="373.2" fill="#ff00ff" stroke="#ff00ff">7</text><text x="469.5" y="368.2" fill="#ff00ff" stroke="#ff00ff">8</text><text x="476.5" y="362.2" fill="#00dc00" stroke="#00dc00" font-weight="bold">9</text><text x="567.5" y="344.2" fill="#ff00ff" stroke="#ff00ff">1</text><text x="574.5" y="340.2" fill="#ff00ff" stroke="#ff00ff">2</text><text x="581.5" y="344.7" fill="#ff00ff" stroke="#ff00ff">3</text><text x="588.5" y="334.2" fill="#ff00ff" stroke="#ff00ff">4</text><text x="595.5" y="331.6" fill="#ff00ff" stroke="#ff00ff">5</text><text x="602.5" y="315.6" fill="#ff00ff" stroke="#ff00ff">6</text><text x="609.5" y="311.6" fill="#ff00ff" stroke="#ff00ff">7</text><text x="616.5" y="308.7" fill="#ff00ff" stroke="#ff00ff">8</text><text x="623.5" y="287.2" fill="#00dc00" stroke="#00dc00" font-weight="bold">9</text><text x="630.5" y="288.2" fill="#ff00ff" stroke="#ff00ff">1</text><text x="637.5" y="286.6" fill="#ff00ff" stroke="#ff00ff">2</text><text x="644.5" y="280.2" fill="#ff00ff" stroke="#ff00ff">3</text><text x="651.5" y="268.2" fill="#ff00ff" stroke="#ff00ff">4</text><text x="658.5" y="243.2" fill="#ff00ff" stroke="#ff00ff">5</text><text x="665.5" y="237.2" fill="#ff00ff" stroke="#ff00ff">6</text><text x="672.5" y="229.2" fill="#ff00ff" stroke="#ff00ff">7</text><text x="679.5" y="236.2" fill="#ff00ff" stroke="#ff00ff">8</text><text x="686.5" y="219.2" fill="#00dc00" stroke="#00dc00" font-weight="bold">9</text><text x="728.5" y="227.2" fill="#ff00ff" stroke="#ff00ff">1</text><text x="735.5" y="230.2" fill="#ff00ff" stroke="#ff00ff">2</text><text x="742.5" y="232.2" fill="#ff00ff" stroke="#ff00ff">3</text><text x="749.5" y="205.2" fill="#ff00ff" stroke="#ff00ff">4</text><text x="756.5" y="199.2" fill="#ff00ff" stroke="#ff00ff">5</text><text x="763.5" y="195.2" fill="#ff00ff" stroke="#ff00ff">6</text><text x="770.5" y="197.2" fill="#ff00ff" stroke="#ff00ff">7</text><text x="777.5" y="185.2" fill="#ff00ff" stroke="#ff00ff">8</text><text x="784.5" y="178.2" fill="#00dc00" stroke="#00dc00" font-weight="bold">9</text><text x="1092.5" y="197.2" fill="#ff00ff" stroke="#ff00ff">1</text><text x="1099.5" y="203.2" fill="#ff00ff" stroke="#ff00ff">2</text><text x="1106.5" y="191.2" fill="#ff00ff" stroke="#ff00ff">3</text><text x="1113.5" y="193.2" fill="#ff00ff" stroke="#ff00ff">4</text><text x="1120.5" y="193.2" fill="#ff00ff" stroke="#ff00ff">5</text><text x="1127.5" y="200.9" fill="#ff00ff" stroke="#ff00ff">6</text><text x="1134.5" y="191.6" fill="#ff00ff" stroke="#ff00ff">7</text><text x="1141.5" y="173.2" fill="#ff00ff" stroke="#ff00ff">8</text><text x="1148.5" y="172.2" fill="#00dc00" stroke="#00dc00" font-weight="bold">9</text><text x="1029.5" y="210.5" fill="#ff00ff" stroke="#ff00ff">1</text><text x="1036.5" y="217.0" fill="#ff00ff" stroke="#ff00ff">2</text><text x="1043.5" y="226.0" fill="#ff00ff" stroke="#ff00ff">3</text><text x="1050.5" y="227.0" fill="#ff00ff" stroke="#ff00ff">4</text><text x="1057.5" y="230.0" fill="#ff00ff" stroke="#ff00ff">5</text><text x="1064.5" y="263.7" fill="#ff00ff" stroke="#ff00ff">6</text><text x="1071.5" y="271.0" fill="#ff00ff" stroke="#ff00ff">7</text><text x="1078.5" y="251.5" fill="#ff00ff" stroke="#ff00ff">8</text><text x="1085.5" y="246.6" fill="#ff3232" stroke="#ff3232" font-weight="bold">9</text></g>
</svg>
<div id="chartframe" style="left:0;top:0;width:1276px;height:800px">
<div style="left:18px;top:111px;width:1258px;height:1px;background:#4b4f5d;"></div>
<div style="left:18px;top:112px;width:1px;height:667px;background:#4b4f5d;"></div>
<div style="left:1213px;top:112px;width:1px;height:652px;background:#4b4f5d;"></div>
<div style="left:18px;top:490px;width:1258px;height:1px;background:#4b4f5d;"></div>
<div style="left:18px;top:628px;width:1258px;height:1px;background:#4b4f5d;"></div>
<div style="left:18px;top:763px;width:1195px;height:1px;background:#4b4f5d;"></div>
<span style="top:113.34px;font-size:12px;line-height:16px;color:#fff;left:23.00px;">日线</span>
<span style="top:113.34px;font-size:12px;line-height:16px;color:#fff;left:55.00px;">深证成指</span>
<span style="top:113.81px;font-size:11.6px;line-height:15px;color:#fff;left:107.00px;font-family:'Liberation Mono','Noto Sans CJK SC',monospace;letter-spacing:-0.96px;">MA5: 13080.22</span>
<svg style="position:absolute;left:187.5px;top:116.5px" width="6" height="10" viewBox="0 0 6 10" shape-rendering="crispEdges"><path d="M2.500 0v9M0 6.500l2.500 3 2.500-3" fill="none" stroke="#02e2f4" stroke-width="1"/></svg>
<span style="top:113.81px;font-size:11.6px;line-height:15px;color:#ffff00;left:200.00px;font-family:'Liberation Mono','Noto Sans CJK SC',monospace;letter-spacing:-0.96px;">MA10: 13147.93</span>
<svg style="position:absolute;left:286.5px;top:116.5px" width="6" height="10" viewBox="0 0 6 10" shape-rendering="crispEdges"><path d="M2.500 10v-9M0 3.500l2.500-3 2.500 3" fill="none" stroke="#ff3232" stroke-width="1"/></svg>
<span style="top:113.81px;font-size:11.6px;line-height:15px;color:#ff80ff;left:300.00px;font-family:'Liberation Mono','Noto Sans CJK SC',monospace;letter-spacing:-0.96px;">MA20: 13014.32</span>
<svg style="position:absolute;left:386.5px;top:116.5px" width="6" height="10" viewBox="0 0 6 10" shape-rendering="crispEdges"><path d="M2.500 0v9M0 6.500l2.500 3 2.500-3" fill="none" stroke="#02e2f4" stroke-width="1"/></svg>
<span style="top:113.81px;font-size:11.6px;line-height:15px;color:#00e600;left:400.00px;font-family:'Liberation Mono','Noto Sans CJK SC',monospace;letter-spacing:-0.96px;">MA30: 13105.17</span>
<svg style="position:absolute;left:486.5px;top:116.5px" width="6" height="10" viewBox="0 0 6 10" shape-rendering="crispEdges"><path d="M2.500 0v9M0 6.500l2.500 3 2.500-3" fill="none" stroke="#02e2f4" stroke-width="1"/></svg>
<span style="top:113.81px;font-size:11.6px;line-height:15px;color:#02e2f4;left:500.00px;font-family:'Liberation Mono','Noto Sans CJK SC',monospace;letter-spacing:-0.96px;">MA60: 13173.99</span>
<svg style="position:absolute;left:586.5px;top:116.5px" width="6" height="10" viewBox="0 0 6 10" shape-rendering="crispEdges"><path d="M2.500 0v9M0 6.500l2.500 3 2.500-3" fill="none" stroke="#02e2f4" stroke-width="1"/></svg>
<span style="top:125.21px;font-size:11.6px;line-height:15px;color:#ff3232;left:1219.00px;font-family:'Liberation Mono','Noto Sans CJK SC',monospace;letter-spacing:-0.96px;">14037.57</span>
<span style="top:196.21px;font-size:11.6px;line-height:15px;color:#ff3232;left:1219.00px;font-family:'Liberation Mono','Noto Sans CJK SC',monospace;letter-spacing:-0.96px;">13121.78</span>
<span style="top:268.21px;font-size:11.6px;line-height:15px;color:#ff3232;left:1219.00px;font-family:'Liberation Mono','Noto Sans CJK SC',monospace;letter-spacing:-0.96px;">12193.09</span>
<span style="top:339.21px;font-size:11.6px;line-height:15px;color:#ff3232;left:1219.00px;font-family:'Liberation Mono','Noto Sans CJK SC',monospace;letter-spacing:-0.96px;">11277.29</span>
<span style="top:411.21px;font-size:11.6px;line-height:15px;color:#ff3232;left:1219.00px;font-family:'Liberation Mono','Noto Sans CJK SC',monospace;letter-spacing:-0.96px;">10348.60</span>
<span style="top:131.64px;font-size:14.5px;line-height:19px;color:#ffff80;left:1175.50px;font-family:'Liberation Mono','Noto Sans CJK SC',monospace;font-weight:bold;letter-spacing:-2.2px;">***</span>
<svg style="position:absolute;left:849px;top:144px" width="18" height="10" viewBox="0 0 18 10"><path d="M0.500 4.500h12M0.500 4.500l3-2v4z" fill="#c8c8c8" stroke="#c8c8c8" stroke-width="1"/></svg>
<span style="top:141.04px;font-size:12.3px;line-height:16px;color:#b4b4b4;left:864.00px;">13806.69</span>
<svg style="position:absolute;left:37px;top:467px" width="14" height="10" viewBox="0 0 14 10"><path d="M0.500 4.500h12M0.500 4.500l3-2v4z" fill="#c8c8c8" stroke="#c8c8c8" stroke-width="1"/></svg>
<span style="top:463.94px;font-size:12.3px;line-height:16px;color:#b4b4b4;left:51.00px;">9650.79</span>
<span style="top:491.84px;font-size:12px;line-height:16px;color:#ff3232;left:23.00px;">总手</span>
<span style="top:492.31px;font-size:11.6px;line-height:15px;color:#ff3232;left:47.00px;font-family:'Liberation Mono','Noto Sans CJK SC',monospace;letter-spacing:-0.96px;">: 2.02</span>
<span style="top:491.84px;font-size:12px;line-height:16px;color:#ff3232;left:83.00px;">亿</span>
<svg style="position:absolute;left:98.5px;top:495px" width="6" height="10" viewBox="0 0 6 10" shape-rendering="crispEdges"><path d="M2.500 0v9M0 6.500l2.500 3 2.500-3" fill="none" stroke="#02e2f4" stroke-width="1"/></svg>
<span style="top:492.31px;font-size:11.6px;line-height:15px;color:#ffff00;left:111.00px;font-family:'Liberation Mono','Noto Sans CJK SC',monospace;letter-spacing:-0.96px;">MAVOL5: 5.80</span>
<span style="top:491.84px;font-size:12px;line-height:16px;color:#ffff00;left:183.00px;">亿</span>
<svg style="position:absolute;left:198.5px;top:495px" width="6" height="10" viewBox="0 0 6 10" shape-rendering="crispEdges"><path d="M2.500 0v9M0 6.500l2.500 3 2.500-3" fill="none" stroke="#02e2f4" stroke-width="1"/></svg>
<span style="top:492.31px;font-size:11.6px;line-height:15px;color:#fff;left:211.00px;font-family:'Liberation Mono','Noto Sans CJK SC',monospace;letter-spacing:-0.96px;">MAVOL10: 6.30</span>
<span style="top:491.84px;font-size:12px;line-height:16px;color:#fff;left:289.00px;">亿</span>
<svg style="position:absolute;left:304.5px;top:495px" width="6" height="10" viewBox="0 0 6 10" shape-rendering="crispEdges"><path d="M2.500 0v9M0 6.500l2.500 3 2.500-3" fill="none" stroke="#02e2f4" stroke-width="1"/></svg>
<span style="top:503.81px;font-size:11.6px;line-height:15px;color:#e0e0e0;left:1219.00px;font-family:'Liberation Mono','Noto Sans CJK SC',monospace;letter-spacing:-0.96px;">114.36</span>
<span style="top:503.34px;font-size:12px;line-height:16px;color:#e0e0e0;left:1255.00px;">万</span>
<span style="top:550.81px;font-size:11.6px;line-height:15px;color:#e0e0e0;left:1219.00px;font-family:'Liberation Mono','Noto Sans CJK SC',monospace;letter-spacing:-0.96px;">57.18</span>
<span style="top:550.34px;font-size:12px;line-height:16px;color:#e0e0e0;left:1249.00px;">万</span>
<div style="left:1218px;top:593px;width:32px;height:12px;border:1px solid #555;box-sizing:border-box;"></div>
<span style="top:591.81px;font-size:11.6px;line-height:15px;color:#e0e0e0;left:1219.00px;font-family:'Liberation Mono','Noto Sans CJK SC',monospace;letter-spacing:-0.96px;">X1000</span>
<div style="left:18px;top:607px;width:452px;height:1px;background:#4b4f5d;"></div>
<div style="left:18px;top:607px;width:36px;height:22px;background:#000;border:1px solid #4b4f5d;box-sizing:border-box;"></div>
<span style="top:609.84px;font-size:12px;line-height:16px;color:#d0d0d0;left:22.50px;">设置</span>
<div style="left:53px;top:607px;width:57px;height:22px;background:#0b6fdc;border:1px solid #4b4f5d;box-sizing:border-box;"></div>
<span style="top:609.84px;font-size:12px;line-height:16px;color:#fff;left:62.00px;">成交量</span>
<div style="left:109px;top:607px;width:93px;height:22px;background:#000;border:1px solid #4b4f5d;box-sizing:border-box;"></div>
<span style="top:609.84px;font-size:12px;line-height:16px;color:#fff;left:118.00px;">多周期成交量</span>
<div style="left:201px;top:607px;width:81px;height:22px;background:#000;border:1px solid #4b4f5d;box-sizing:border-box;"></div>
<span style="top:609.84px;font-size:12px;line-height:16px;color:#fff;left:210.00px;">虚拟成交量</span>
<div style="left:281px;top:607px;width:45px;height:22px;background:#000;border:1px solid #4b4f5d;box-sizing:border-box;"></div>
<span style="top:609.84px;font-size:12px;line-height:16px;color:#fff;left:290.00px;">金额</span>
<div style="left:325px;top:607px;width:57px;height:22px;background:#000;border:1px solid #4b4f5d;box-sizing:border-box;"></div>
<span style="top:609.84px;font-size:12px;line-height:16px;color:#fff;left:334.00px;">换手率</span>
<div style="left:381px;top:607px;width:45px;height:22px;background:#000;border:1px solid #4b4f5d;box-sizing:border-box;"></div>
<span style="top:609.84px;font-size:12px;line-height:16px;color:#fff;left:390.00px;">内盘</span>
<div style="left:425px;top:607px;width:45px;height:22px;background:#000;border:1px solid #4b4f5d;box-sizing:border-box;"></div>
<span style="top:609.84px;font-size:12px;line-height:16px;color:#fff;left:434.00px;">外盘</span>
<span style="top:630.81px;font-size:11.6px;line-height:15px;color:#e8e8e8;left:23.00px;font-family:'Liberation Mono','Noto Sans CJK SC',monospace;letter-spacing:-0.96px;">MACD(12,26,9)</span>
<span style="top:630.81px;font-size:11.6px;line-height:15px;color:#00e600;left:104.50px;font-family:'Liberation Mono','Noto Sans CJK SC',monospace;letter-spacing:-0.96px;">MACD: -13.91</span>
<svg style="position:absolute;left:180.0px;top:633.5px" width="6" height="10" viewBox="0 0 6 10" shape-rendering="crispEdges"><path d="M2.500 0v9M0 6.500l2.500 3 2.500-3" fill="none" stroke="#02e2f4" stroke-width="1"/></svg>
<span style="top:630.81px;font-size:11.6px;line-height:15px;color:#fff;left:192.50px;font-family:'Liberation Mono','Noto Sans CJK SC',monospace;letter-spacing:-0.96px;">DIFF: -6.36</span>
<svg style="position:absolute;left:261.5px;top:633.5px" width="6" height="10" viewBox="0 0 6 10" shape-rendering="crispEdges"><path d="M2.500 0v9M0 6.500l2.500 3 2.500-3" fill="none" stroke="#02e2f4" stroke-width="1"/></svg>
<span style="top:630.81px;font-size:11.6px;line-height:15px;color:#ffff00;left:274.50px;font-family:'Liberation Mono','Noto Sans CJK SC',monospace;letter-spacing:-0.96px;">DEA: +0.595</span>
<svg style="position:absolute;left:343.5px;top:633.5px" width="6" height="10" viewBox="0 0 6 10" shape-rendering="crispEdges"><path d="M2.500 0v9M0 6.500l2.500 3 2.500-3" fill="none" stroke="#02e2f4" stroke-width="1"/></svg>
<span style="top:630.34px;font-size:12px;line-height:16px;color:#d8d8d8;left:1156.00px;">指标说明</span>
<span style="top:641.81px;font-size:11.6px;line-height:15px;color:#ff3232;left:1219.00px;font-family:'Liberation Mono','Noto Sans CJK SC',monospace;letter-spacing:-0.96px;">+442.2</span>
<span style="top:655.81px;font-size:11.6px;line-height:15px;color:#ff3232;left:1219.00px;font-family:'Liberation Mono','Noto Sans CJK SC',monospace;letter-spacing:-0.96px;">+355.2</span>
<span style="top:712.81px;font-size:11.6px;line-height:15px;color:#ff3232;left:1219.00px;font-family:'Liberation Mono','Noto Sans CJK SC',monospace;letter-spacing:-0.96px;">+0</span>
<span style="top:763.49px;font-size:11px;line-height:14px;color:#8c8c8c;left:20.00px;">04</span>
<div style="left:18px;top:764px;width:1px;height:4px;background:#4b4f5d;"></div>
<span style="top:763.49px;font-size:11px;line-height:14px;color:#8c8c8c;left:114.00px;">05</span>
<div style="left:113px;top:764px;width:1px;height:4px;background:#4b4f5d;"></div>
<span style="top:763.49px;font-size:11px;line-height:14px;color:#8c8c8c;left:247.00px;">06</span>
<div style="left:246px;top:764px;width:1px;height:4px;background:#4b4f5d;"></div>
<span style="top:763.49px;font-size:11px;line-height:14px;color:#8c8c8c;left:387.00px;">07</span>
<div style="left:386px;top:764px;width:1px;height:4px;background:#4b4f5d;"></div>
<span style="top:763.49px;font-size:11px;line-height:14px;color:#8c8c8c;left:548.00px;">08</span>
<div style="left:547px;top:764px;width:1px;height:4px;background:#4b4f5d;"></div>
<span style="top:763.49px;font-size:11px;line-height:14px;color:#8c8c8c;left:695.00px;">09</span>
<div style="left:694px;top:764px;width:1px;height:4px;background:#4b4f5d;"></div>
<span style="top:763.49px;font-size:11px;line-height:14px;color:#8c8c8c;left:850.00px;">10</span>
<div style="left:849px;top:764px;width:1px;height:4px;background:#4b4f5d;"></div>
<span style="top:763.49px;font-size:11px;line-height:14px;color:#8c8c8c;left:969.00px;">11</span>
<div style="left:968px;top:764px;width:1px;height:4px;background:#4b4f5d;"></div>
<span style="top:763.49px;font-size:11px;line-height:14px;color:#8c8c8c;left:1109.00px;">12</span>
<div style="left:1108px;top:764px;width:1px;height:4px;background:#4b4f5d;"></div>
<div style="left:18px;top:778px;width:36px;height:23px;background:#000;border:1px solid #4b4f5d;box-sizing:border-box;"></div>
<span style="top:781.84px;font-size:12px;line-height:16px;color:#d0d0d0;left:22.50px;">设置</span>
<div style="left:53px;top:778px;width:45px;height:23px;background:#0b6fdc;border:1px solid #4b4f5d;box-sizing:border-box;"></div>
<span style="top:781.81px;font-size:11.6px;line-height:15px;color:#fff;left:62.50px;font-family:'Liberation Mono','Noto Sans CJK SC',monospace;letter-spacing:-0.96px;">MACD</span>
<div style="left:97px;top:778px;width:39px;height:23px;background:#000;border:1px solid #4b4f5d;box-sizing:border-box;"></div>
<span style="top:781.81px;font-size:11.6px;line-height:15px;color:#fff;left:106.50px;font-family:'Liberation Mono','Noto Sans CJK SC',monospace;letter-spacing:-0.96px;">KDJ</span>
<div style="left:135px;top:778px;width:39px;height:23px;background:#000;border:1px solid #4b4f5d;box-sizing:border-box;"></div>
<span style="top:781.81px;font-size:11.6px;line-height:15px;color:#fff;left:144.50px;font-family:'Liberation Mono','Noto Sans CJK SC',monospace;letter-spacing:-0.96px;">RSI</span>
<div style="left:173px;top:778px;width:45px;height:23px;background:#000;border:1px solid #4b4f5d;box-sizing:border-box;"></div>
<span style="top:781.81px;font-size:11.6px;line-height:15px;color:#fff;left:182.50px;font-family:'Liberation Mono','Noto Sans CJK SC',monospace;letter-spacing:-0.96px;">BOLL</span>
<div style="left:217px;top:778px;width:45px;height:23px;background:#000;border:1px solid #4b4f5d;box-sizing:border-box;"></div>
<span style="top:781.84px;font-size:12px;line-height:16px;color:#fff;left:226.00px;">主力</span>
<div style="left:261px;top:778px;width:39px;height:23px;background:#000;border:1px solid #4b4f5d;box-sizing:border-box;"></div>
<span style="top:781.81px;font-size:11.6px;line-height:15px;color:#fff;left:270.50px;font-family:'Liberation Mono','Noto Sans CJK SC',monospace;letter-spacing:-0.96px;">W&amp;R</span>
<div style="left:299px;top:778px;width:39px;height:23px;background:#000;border:1px solid #4b4f5d;box-sizing:border-box;"></div>
<span style="top:781.81px;font-size:11.6px;line-height:15px;color:#fff;left:308.50px;font-family:'Liberation Mono','Noto Sans CJK SC',monospace;letter-spacing:-0.96px;">DMI</span>
<div style="left:337px;top:778px;width:45px;height:23px;background:#000;border:1px solid #4b4f5d;box-sizing:border-box;"></div>
<span style="top:781.81px;font-size:11.6px;line-height:15px;color:#fff;left:346.50px;font-family:'Liberation Mono','Noto Sans CJK SC',monospace;letter-spacing:-0.96px;">BIAS</span>
<div style="left:381px;top:778px;width:39px;height:23px;background:#000;border:1px solid #4b4f5d;box-sizing:border-box;"></div>
<span style="top:781.81px;font-size:11.6px;line-height:15px;color:#fff;left:390.50px;font-family:'Liberation Mono','Noto Sans CJK SC',monospace;letter-spacing:-0.96px;">ASI</span>
<div style="left:419px;top:778px;width:33px;height:23px;background:#000;border:1px solid #4b4f5d;box-sizing:border-box;"></div>
<span style="top:781.81px;font-size:11.6px;line-height:15px;color:#fff;left:428.50px;font-family:'Liberation Mono','Noto Sans CJK SC',monospace;letter-spacing:-0.96px;">VR</span>
<div style="left:451px;top:778px;width:45px;height:23px;background:#000;border:1px solid #4b4f5d;box-sizing:border-box;"></div>
<span style="top:781.81px;font-size:11.6px;line-height:15px;color:#fff;left:460.50px;font-family:'Liberation Mono','Noto Sans CJK SC',monospace;letter-spacing:-0.96px;">ARBR</span>
<div style="left:495px;top:778px;width:39px;height:23px;background:#000;border:1px solid #4b4f5d;box-sizing:border-box;"></div>
<span style="top:781.81px;font-size:11.6px;line-height:15px;color:#fff;left:504.50px;font-family:'Liberation Mono','Noto Sans CJK SC',monospace;letter-spacing:-0.96px;">DPO</span>
<div style="left:533px;top:778px;width:45px;height:23px;background:#000;border:1px solid #4b4f5d;box-sizing:border-box;"></div>
<span style="top:781.81px;font-size:11.6px;line-height:15px;color:#fff;left:542.50px;font-family:'Liberation Mono','Noto Sans CJK SC',monospace;letter-spacing:-0.96px;">TRIX</span>
<div style="left:577px;top:778px;width:51px;height:23px;background:#000;border:1px solid #4b4f5d;box-sizing:border-box;"></div>
<span style="top:781.84px;font-size:12px;line-height:16px;color:#fff;left:587.00px;">新</span>
<span style="top:781.81px;font-size:11.6px;line-height:15px;color:#fff;left:599.00px;font-family:'Liberation Mono','Noto Sans CJK SC',monospace;letter-spacing:-0.96px;">DMA</span>
<div style="left:627px;top:778px;width:39px;height:23px;background:#000;border:1px solid #4b4f5d;box-sizing:border-box;"></div>
<span style="top:781.81px;font-size:11.6px;line-height:15px;color:#fff;left:636.50px;font-family:'Liberation Mono','Noto Sans CJK SC',monospace;letter-spacing:-0.96px;">BBI</span>
<div style="left:665px;top:778px;width:39px;height:23px;background:#000;border:1px solid #4b4f5d;box-sizing:border-box;"></div>
<span style="top:781.81px;font-size:11.6px;line-height:15px;color:#fff;left:674.50px;font-family:'Liberation Mono','Noto Sans CJK SC',monospace;letter-spacing:-0.96px;">MTM</span>
<div style="left:703px;top:778px;width:39px;height:23px;background:#000;border:1px solid #4b4f5d;box-sizing:border-box;"></div>
<span style="top:781.81px;font-size:11.6px;line-height:15px;color:#fff;left:712.50px;font-family:'Liberation Mono','Noto Sans CJK SC',monospace;letter-spacing:-0.96px;">OBV</span>
<div style="left:741px;top:778px;width:39px;height:23px;background:#000;border:1px solid #4b4f5d;box-sizing:border-box;"></div>
<span style="top:781.81px;font-size:11.6px;line-height:15px;color:#fff;left:750.50px;font-family:'Liberation Mono','Noto Sans CJK SC',monospace;letter-spacing:-0.96px;">SAR</span>
<div style="left:779px;top:778px;width:51px;height:23px;background:#000;border:1px solid #4b4f5d;box-sizing:border-box;"></div>
<span style="top:781.81px;font-size:11.6px;line-height:15px;color:#fff;left:788.50px;font-family:'Liberation Mono','Noto Sans CJK SC',monospace;letter-spacing:-0.96px;">EXPMA</span>
<div style="left:829px;top:778px;width:39px;height:23px;background:#000;border:1px solid #4b4f5d;box-sizing:border-box;"></div>
<span style="top:781.81px;font-size:11.6px;line-height:15px;color:#fff;left:838.50px;font-family:'Liberation Mono','Noto Sans CJK SC',monospace;letter-spacing:-0.96px;">ENE</span>
</div>
<div id="quote" style="left:1276px;top:87px;width:323px;height:713px;background:#000">
</div>
<div style="left:1276px;top:87px;width:1px;height:713px;background:#4b4f5d;"></div>
<span style="top:91.75px;font-size:20px;line-height:26px;color:#fff;left:1278.00px;font-family:'Liberation Serif','Noto Serif CJK SC',serif;font-weight:bold;">深证成指</span>
<span style="top:91.75px;font-size:20px;line-height:26px;color:#fff;left:1373.00px;font-family:'Liberation Serif','Noto Serif CJK SC',serif;font-weight:bold;letter-spacing:0.4px;">399001</span>
<span style="top:118.74px;font-size:21.5px;line-height:28px;color:#ff3232;left:1279.00px;font-family:'Liberation Serif','Noto Serif CJK SC',serif;font-weight:bold;letter-spacing:0.9px;">12968.64</span>
<span style="top:125.87px;font-size:15.5px;line-height:20px;color:#ff3232;left:1371.00px;font-family:'Liberation Mono','Noto Sans CJK SC',monospace;font-weight:bold;letter-spacing:-0.8px;">+53.97</span>
<span style="top:125.87px;font-size:15.5px;line-height:20px;color:#ff3232;left:1430.00px;font-family:'Liberation Mono','Noto Sans CJK SC',monospace;font-weight:bold;letter-spacing:-0.8px;">+0.42%</span>
<div style="left:1277px;top:146px;width:322px;height:1px;background:#4b4f5d;"></div>
<div style="left:1277px;top:170px;width:322px;height:1px;background:#4b4f5d;"></div>
<div style="left:1277px;top:305px;width:322px;height:1px;background:#4b4f5d;"></div>
<div style="left:1277px;top:346px;width:322px;height:1px;background:#4b4f5d;"></div>
<div style="left:1277px;top:485px;width:322px;height:1px;background:#4b4f5d;"></div>
<div style="left:1439px;top:346px;width:1px;height:139px;background:#4b4f5d;"></div>
<span style="top:148.76px;font-size:16px;line-height:21px;color:#d2d2d2;left:1281.00px;font-weight:300;">委比</span>
<span style="top:150.35px;font-size:14px;line-height:18px;color:#ff3232;right:162.50px;font-weight:bold;">+22.17%</span>
<span style="top:150.35px;font-size:14px;line-height:18px;color:#ff3232;right:2.00px;font-weight:bold;">+7052336</span>
<span style="top:170.76px;font-size:16px;line-height:21px;color:#d2d2d2;left:1281.00px;font-weight:300;">最新</span>
<span style="top:172.35px;font-size:14px;line-height:18px;color:#ff3232;right:162.50px;font-weight:bold;">12968.64</span>
<span style="top:170.76px;font-size:16px;line-height:21px;color:#d2d2d2;left:1442.00px;font-weight:300;">昨收</span>
<span style="top:172.35px;font-size:14px;line-height:18px;color:#fff;right:2.00px;font-weight:bold;">12914.67</span>
<span style="top:193.76px;font-size:16px;line-height:21px;color:#d2d2d2;left:1281.00px;font-weight:300;">涨跌</span>
<span style="top:195.35px;font-size:14px;line-height:18px;color:#ff3232;right:162.50px;font-weight:bold;">+53.97</span>
<span style="top:193.76px;font-size:16px;line-height:21px;color:#d2d2d2;left:1442.00px;font-weight:300;">开盘</span>
<span style="top:195.35px;font-size:14px;line-height:18px;color:#ff3232;right:2.00px;font-weight:bold;">12927.39</span>
<span style="top:216.26px;font-size:16px;line-height:21px;color:#d2d2d2;left:1281.00px;font-weight:300;">涨幅</span>
<span style="top:217.85px;font-size:14px;line-height:18px;color:#ff3232;right:162.50px;font-weight:bold;">+0.42%</span>
<span style="top:216.26px;font-size:16px;line-height:21px;color:#d2d2d2;left:1442.00px;font-weight:300;">最高</span>
<span style="top:217.85px;font-size:14px;line-height:18px;color:#ff3232;right:2.00px;font-weight:bold;">13033.19</span>
<span style="top:238.76px;font-size:16px;line-height:21px;color:#d2d2d2;left:1281.00px;font-weight:300;">振幅</span>
<span style="top:240.35px;font-size:14px;line-height:18px;color:#02e2f4;right:162.50px;font-weight:bold;">0.82%</span>
<span style="top:238.76px;font-size:16px;line-height:21px;color:#d2d2d2;left:1442.00px;font-weight:300;">最低</span>
<span style="top:240.35px;font-size:14px;line-height:18px;color:#ff3232;right:2.00px;font-weight:bold;">12927.39</span>
<span style="top:261.26px;font-size:16px;line-height:21px;color:#d2d2d2;left:1281.00px;font-weight:300;">现手</span>
<span style="top:262.85px;font-size:14px;line-height:18px;color:#02e2f4;right:162.50px;font-weight:bold;">207220</span>
<span style="top:261.26px;font-size:16px;line-height:21px;color:#d2d2d2;left:1442.00px;font-weight:300;">量比</span>
<span style="top:262.85px;font-size:14px;line-height:18px;color:#ff3232;right:2.00px;font-weight:bold;">2.33</span>
<span style="top:283.76px;font-size:16px;line-height:21px;color:#d2d2d2;left:1281.00px;font-weight:300;">总手</span>
<span style="top:283.76px;font-size:16px;line-height:21px;color:#d2d2d2;right:162.50px;font-weight:300;">万</span><span style="top:285.35px;font-size:14px;line-height:18px;color:#d2d2d2;right:178.00px;font-weight:bold;">20190</span>
<span style="top:283.76px;font-size:16px;line-height:21px;color:#d2d2d2;left:1442.00px;font-weight:300;">金额</span>
<span style="top:283.76px;font-size:16px;line-height:21px;color:#02e2f4;right:2.00px;font-weight:300;">亿</span><span style="top:285.35px;font-size:14px;line-height:18px;color:#02e2f4;right:17.50px;font-weight:bold;">3041.02</span>
<span style="top:305.76px;font-size:16px;line-height:21px;color:#d2d2d2;left:1282.00px;font-weight:300;">总市值</span>
<span style="top:305.76px;font-size:16px;line-height:21px;color:#02e2f4;right:2.00px;font-weight:300;">亿</span><span style="top:307.35px;font-size:14px;line-height:18px;color:#02e2f4;right:17.50px;font-weight:bold;">412141</span>
<span style="top:326.26px;font-size:16px;line-height:21px;color:#d2d2d2;left:1282.00px;font-weight:300;">流通市值</span>
<span style="top:326.26px;font-size:16px;line-height:21px;color:#02e2f4;right:2.00px;font-weight:300;">亿</span><span style="top:327.85px;font-size:14px;line-height:18px;color:#02e2f4;right:17.50px;font-weight:bold;">357274</span>
<span style="top:348.26px;font-size:16px;line-height:21px;color:#d2d2d2;left:1282.00px;font-weight:300;">委卖量</span>
<span style="top:349.85px;font-size:14px;line-height:18px;color:#02e2f4;right:162.00px;font-weight:bold;">12376702</span>
<span style="top:348.26px;font-size:16px;line-height:21px;color:#d2d2d2;left:1443.00px;font-weight:300;">上涨家数</span>
<span style="top:349.85px;font-size:14px;line-height:18px;color:#ff3232;right:1.50px;font-weight:bold;">584</span>
<span style="top:370.76px;font-size:16px;line-height:21px;color:#d2d2d2;left:1282.00px;font-weight:300;">委买量</span>
<span style="top:372.35px;font-size:14px;line-height:18px;color:#ff3232;right:162.00px;font-weight:bold;">19429038</span>
<span style="top:370.76px;font-size:16px;line-height:21px;color:#d2d2d2;left:1443.00px;font-weight:300;">平盘家数</span>
<span style="top:372.35px;font-size:14px;line-height:18px;color:#fff;right:1.50px;font-weight:bold;">70</span>
<span style="top:393.76px;font-size:16px;line-height:21px;color:#d2d2d2;left:1282.00px;font-weight:300;">卖金额</span>
<span style="top:393.76px;font-size:16px;line-height:21px;color:#02e2f4;right:162.00px;font-weight:300;">亿</span><span style="top:395.35px;font-size:14px;line-height:18px;color:#02e2f4;right:177.50px;font-weight:bold;">65.77</span>
<span style="top:393.76px;font-size:16px;line-height:21px;color:#d2d2d2;left:1443.00px;font-weight:300;">下跌家数</span>
<span style="top:395.35px;font-size:14px;line-height:18px;color:#00e600;right:1.50px;font-weight:bold;">2262</span>
<span style="top:416.76px;font-size:16px;line-height:21px;color:#d2d2d2;left:1282.00px;font-weight:300;">买金额</span>
<span style="top:416.76px;font-size:16px;line-height:21px;color:#02e2f4;right:162.00px;font-weight:300;">亿</span><span style="top:418.35px;font-size:14px;line-height:18px;color:#02e2f4;right:177.50px;font-weight:bold;">151.7</span>
<span style="top:416.76px;font-size:16px;line-height:21px;color:#d2d2d2;left:1443.00px;font-weight:300;">市盈</span>
<span style="top:418.35px;font-size:14px;line-height:18px;color:#d2d2d2;right:1.50px;font-weight:bold;">47.89</span>
<span style="top:440.26px;font-size:16px;line-height:21px;color:#d2d2d2;left:1282.00px;font-weight:300;">换手</span>
<span style="top:441.85px;font-size:14px;line-height:18px;color:#02e2f4;right:162.00px;font-weight:bold;">0.84%</span>
<span style="top:440.26px;font-size:16px;line-height:21px;color:#d2d2d2;left:1443.00px;font-weight:300;">市盈</span>
<span style="top:440.80px;font-size:15px;line-height:20px;color:#d2d2d2;left:1475.00px;">(</span>
<span style="top:440.90px;font-size:15px;line-height:20px;color:#d2d2d2;left:1479.00px;font-weight:300;">动</span>
<span style="top:440.80px;font-size:15px;line-height:20px;color:#d2d2d2;left:1494.00px;">)</span>
<span style="top:441.85px;font-size:14px;line-height:18px;color:#d2d2d2;right:1.50px;font-weight:bold;">33.74</span>
<span style="top:463.76px;font-size:16px;line-height:21px;color:#d2d2d2;left:1282.00px;font-weight:300;">均价</span>
<span style="top:465.35px;font-size:14px;line-height:18px;color:#00e600;right:162.00px;font-weight:bold;">22.89</span>
<span style="top:463.76px;font-size:16px;line-height:21px;color:#d2d2d2;left:1443.00px;font-weight:300;">市净率</span>
<span style="top:465.35px;font-size:14px;line-height:18px;color:#d2d2d2;right:1.50px;font-weight:bold;">2.55</span>
<span style="top:490.14px;font-size:12px;line-height:16px;color:#d2d2d2;left:1282.00px;">现价</span>
<span style="top:489.97px;font-size:12.5px;line-height:16px;color:#ff3232;left:1386.00px;">12968.64</span>
<span style="top:490.14px;font-size:12px;line-height:16px;color:#d2d2d2;right:1.50px;">2025-12-17,三</span>
<svg style="position:absolute;left:0;top:0" width="1599" height="800" viewBox="0 0 1599 800" shape-rendering="crispEdges">
<rect x="1320" y="513" width="234" height="1" fill="#4d4d4d"/>
<rect x="1320" y="539" width="234" height="1" fill="#4d4d4d"/>
<rect x="1320" y="565" width="234" height="1" fill="#4d4d4d"/>
<rect x="1320" y="592" width="234" height="1" fill="#4d4d4d"/>
<rect x="1320" y="618" width="234" height="1" fill="#4d4d4d"/>
<rect x="1320" y="644" width="234" height="3" fill="#555"/>
<rect x="1320" y="671" width="234" height="1" fill="#4d4d4d"/>
<rect x="1320" y="698" width="234" height="1" fill="#4d4d4d"/>
<rect x="1320" y="724" width="234" height="1" fill="#4d4d4d"/>
<rect x="1320" y="751" width="234" height="1" fill="#4d4d4d"/>
<rect x="1320" y="778" width="234" height="1" fill="#4d4d4d"/>
<rect x="1320" y="513" width="1" height="266" fill="#4d4d4d"/>
<rect x="1379" y="513" width="1" height="266" fill="#4d4d4d"/>
<rect x="1495" y="513" width="1" height="266" fill="#4d4d4d"/>
<rect x="1553" y="513" width="1" height="266" fill="#4d4d4d"/>
<rect x="1437" y="513" width="2" height="266" fill="#4d4d4d"/>
<line x1="1350.5" y1="514" x2="1350.5" y2="778" stroke="#5a5a5a" stroke-width="1" stroke-dasharray="1 2"/>
<line x1="1408.5" y1="514" x2="1408.5" y2="778" stroke="#5a5a5a" stroke-width="1" stroke-dasharray="1 2"/>
<line x1="1466.5" y1="514" x2="1466.5" y2="778" stroke="#5a5a5a" stroke-width="1" stroke-dasharray="1 2"/>
<line x1="1524.5" y1="514" x2="1524.5" y2="778" stroke="#5a5a5a" stroke-width="1" stroke-dasharray="1 2"/>
<polyline fill="none" stroke="#fff" stroke-width="1" points="1321,631 1322.5,597.5 1324,593 1326,584 1327.5,596 1329,597.5 1330,590 1331,585 1332.5,570 1334,562.5 1335,545 1336,530 1337.5,526 1339,525 1340.5,545 1341.5,540 1342.5,548 1345,567.5 1346.5,581 1347.5,575 1348.5,586 1349.5,588"/>
<polyline fill="none" stroke="#f2f264" stroke-width="1" points="1321,655 1322.5,630 1324,617.5 1326,640 1327.5,665 1329,687.5 1331,672.5 1332,650 1333,637.5 1334.5,612 1335.5,604 1337.5,625 1340,660 1342.5,700 1345,725 1347.5,745 1348.5,766 1349.5,760"/>
</svg>
<span style="top:532.11px;font-size:11.6px;line-height:15px;color:#ff3232;left:1285.50px;font-family:'Liberation Mono','Noto Sans CJK SC',monospace;letter-spacing:-0.96px;">13018</span>
<span style="top:532.11px;font-size:11.6px;line-height:15px;color:#ff3232;left:1559.50px;font-family:'Liberation Mono','Noto Sans CJK SC',monospace;letter-spacing:-0.96px;">+0.80%</span>
<span style="top:558.11px;font-size:11.6px;line-height:15px;color:#ff3232;left:1285.50px;font-family:'Liberation Mono','Noto Sans CJK SC',monospace;letter-spacing:-0.96px;">12993</span>
<span style="top:558.11px;font-size:11.6px;line-height:15px;color:#ff3232;left:1559.50px;font-family:'Liberation Mono','Noto Sans CJK SC',monospace;letter-spacing:-0.96px;">+0.61%</span>
<span style="top:585.11px;font-size:11.6px;line-height:15px;color:#ff3232;left:1285.50px;font-family:'Liberation Mono','Noto Sans CJK SC',monospace;letter-spacing:-0.96px;">12967</span>
<span style="top:585.11px;font-size:11.6px;line-height:15px;color:#ff3232;left:1559.50px;font-family:'Liberation Mono','Noto Sans CJK SC',monospace;letter-spacing:-0.96px;">+0.40%</span>
<span style="top:611.11px;font-size:11.6px;line-height:15px;color:#ff3232;left:1285.50px;font-family:'Liberation Mono','Noto Sans CJK SC',monospace;letter-spacing:-0.96px;">12941</span>
<span style="top:611.11px;font-size:11.6px;line-height:15px;color:#ff3232;left:1559.50px;font-family:'Liberation Mono','Noto Sans CJK SC',monospace;letter-spacing:-0.96px;">+0.21%</span>
<span style="top:638.11px;font-size:11.6px;line-height:15px;color:#fff;left:1285.50px;font-family:'Liberation Mono','Noto Sans CJK SC',monospace;letter-spacing:-0.96px;">12915</span>
<span style="top:638.11px;font-size:11.6px;line-height:15px;color:#fff;left:1559.50px;font-family:'Liberation Mono','Noto Sans CJK SC',monospace;letter-spacing:-0.96px;">+0.00%</span>
<span style="top:664.11px;font-size:11.6px;line-height:15px;color:#00e600;left:1285.50px;font-family:'Liberation Mono','Noto Sans CJK SC',monospace;letter-spacing:-0.96px;">12890</span>
<span style="top:664.11px;font-size:11.6px;line-height:15px;color:#00e600;left:1559.50px;font-family:'Liberation Mono','Noto Sans CJK SC',monospace;letter-spacing:-0.96px;">-0.19%</span>
<span style="top:691.11px;font-size:11.6px;line-height:15px;color:#00e600;left:1285.50px;font-family:'Liberation Mono','Noto Sans CJK SC',monospace;letter-spacing:-0.96px;">12863</span>
<span style="top:691.11px;font-size:11.6px;line-height:15px;color:#00e600;left:1559.50px;font-family:'Liberation Mono','Noto Sans CJK SC',monospace;letter-spacing:-0.96px;">-0.40%</span>
<span style="top:717.11px;font-size:11.6px;line-height:15px;color:#00e600;left:1285.50px;font-family:'Liberation Mono','Noto Sans CJK SC',monospace;letter-spacing:-0.96px;">12838</span>
<span style="top:717.11px;font-size:11.6px;line-height:15px;color:#00e600;left:1559.50px;font-family:'Liberation Mono','Noto Sans CJK SC',monospace;letter-spacing:-0.96px;">-0.59%</span>
<span style="top:744.11px;font-size:11.6px;line-height:15px;color:#00e600;left:1285.50px;font-family:'Liberation Mono','Noto Sans CJK SC',monospace;letter-spacing:-0.96px;">12812</span>
<span style="top:744.11px;font-size:11.6px;line-height:15px;color:#00e600;left:1559.50px;font-family:'Liberation Mono','Noto Sans CJK SC',monospace;letter-spacing:-0.96px;">-0.80%</span>
<div style="left:1277px;top:778px;width:44px;height:22px;background:#0b6fdc;"></div>
<span style="top:781.64px;font-size:12px;line-height:16px;color:#fff;left:1287.00px;">分时</span>
<div style="left:1320px;top:778px;width:45px;height:23px;border:1px solid #4b4f5d;box-sizing:border-box;"></div>
<span style="top:781.64px;font-size:12px;line-height:16px;color:#fff;left:1330.00px;">筹码</span>
</body></html>
